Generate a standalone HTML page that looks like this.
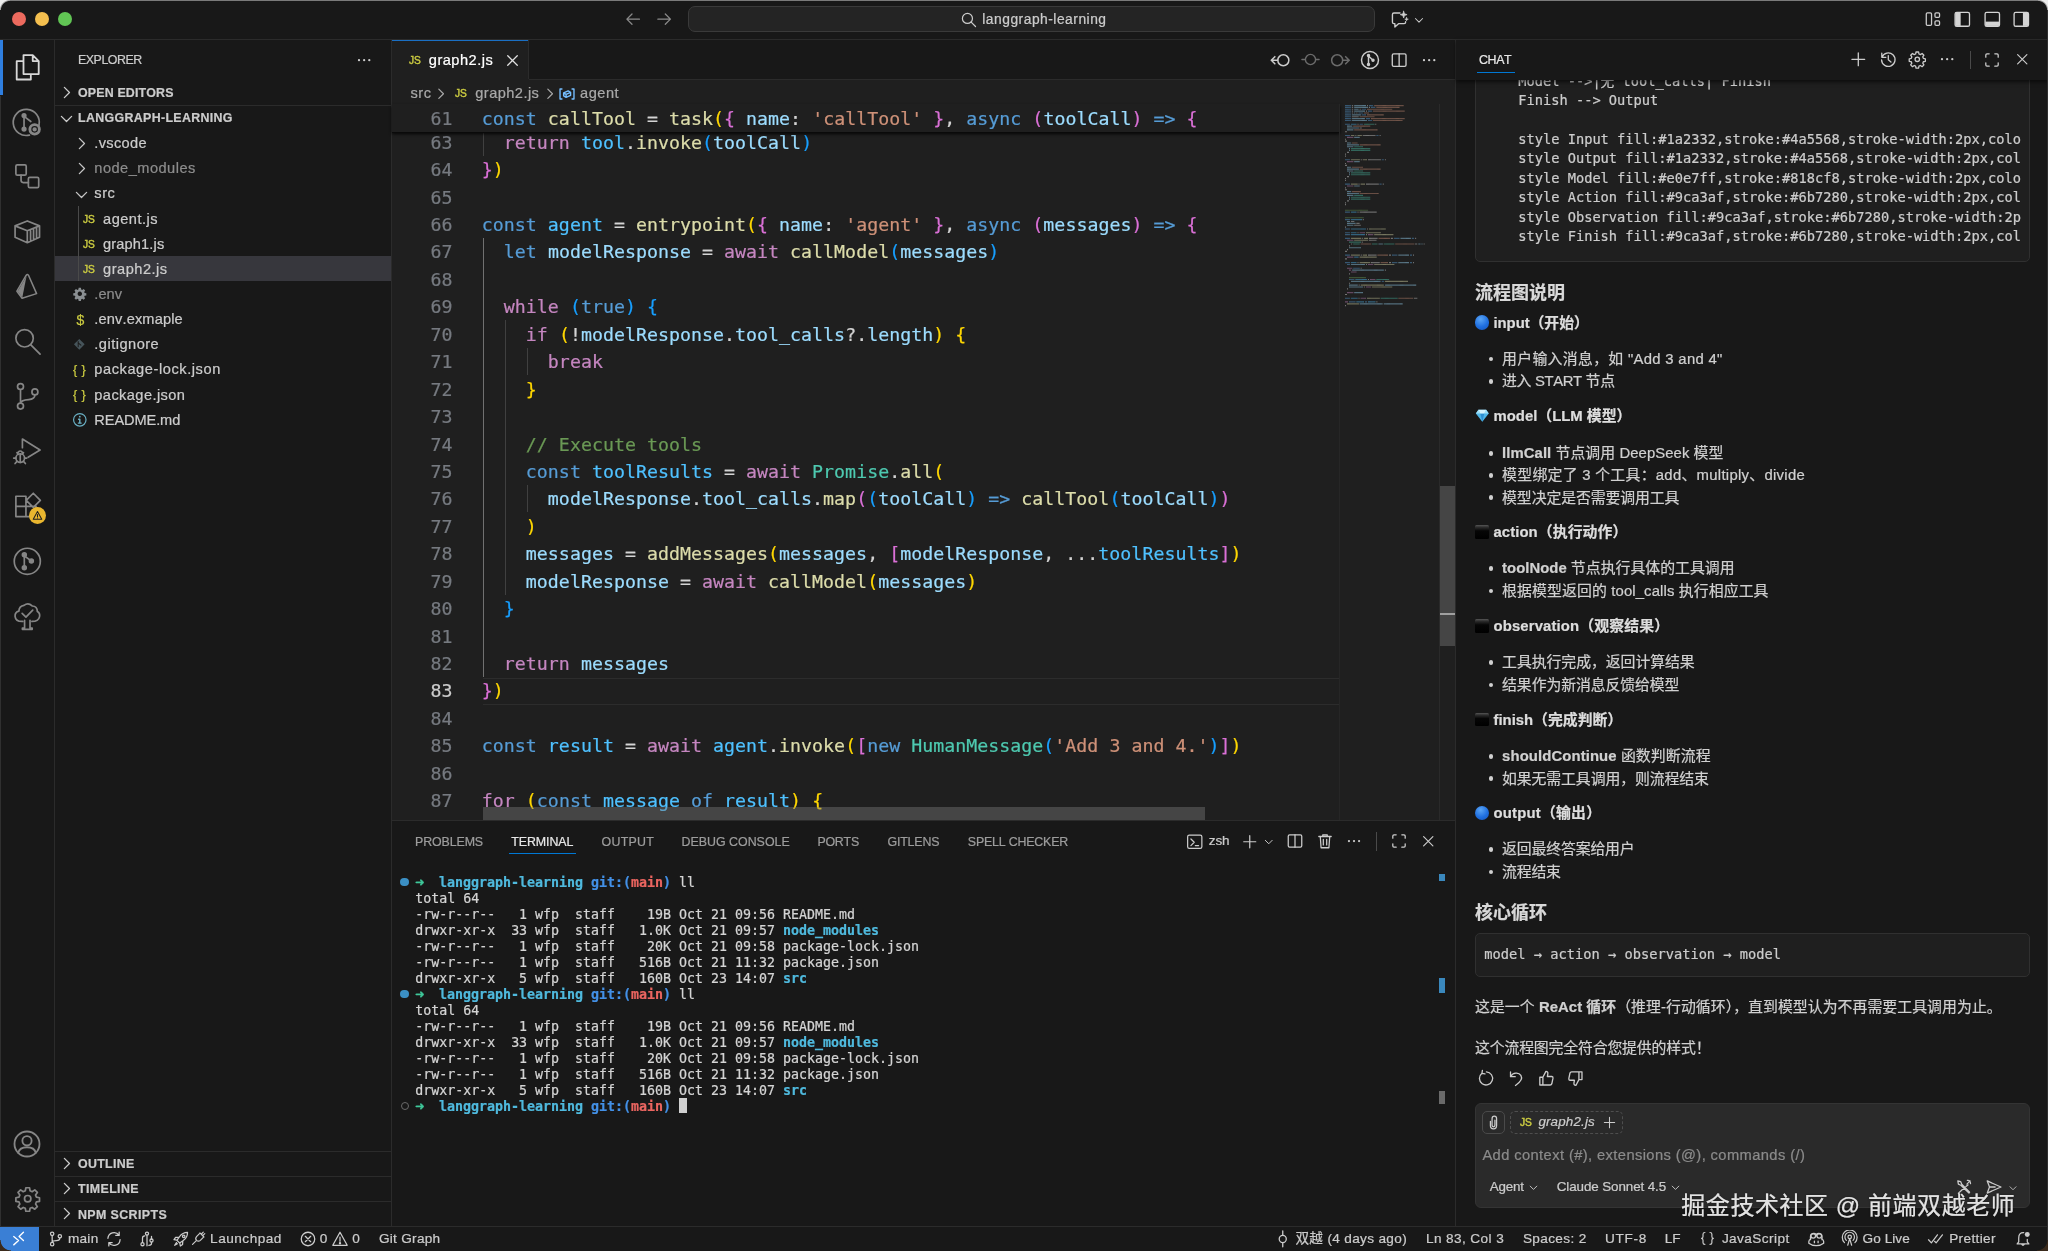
<!DOCTYPE html>
<html lang="zh"><head><meta charset="utf-8"><title>graph2.js — langgraph-learning</title>
<style>
html,body{margin:0;padding:0;background:#181818;}
body{width:2048px;height:1251px;position:relative;overflow:hidden;background:#181818;font-family:'Liberation Sans','Noto Sans CJK SC',sans-serif;font-kerning:none;}
.a{position:absolute;}
.t{white-space:pre;-webkit-text-stroke:0.22px currentColor;}
b{font-weight:700;}
</style></head><body>
<div id="app" style="position:absolute;left:0;top:0;width:2048px;height:1251px;will-change:transform;">
<div class="a" style="left:391.50px;top:39.00px;width:1064.00px;height:782.00px;background:#1f1f1f;"></div>
<div class="a" style="left:391.50px;top:39.00px;width:1064.00px;height:40.00px;background:#181818;"></div>
<div class="a" style="left:528.20px;top:78.50px;width:927.00px;height:1.00px;background:#2b2b2b;"></div>
<div class="a" style="left:392.00px;top:39.00px;width:136.50px;height:41.00px;background:#1f1f1f;"></div>
<div class="a" style="left:528.20px;top:39.00px;width:1.00px;height:40.00px;background:#2b2b2b;"></div>
<div class="a" style="left:0.00px;top:0.00px;width:2048.00px;height:39.00px;background:#181818;"></div>
<div class="a" style="left:0.00px;top:38.90px;width:2048.00px;height:1.00px;background:#2b2b2b;"></div>
<div class="a" style="left:392.00px;top:39.80px;width:136.40px;height:1.20px;background:#1a6fc4;"></div>
<div class="a" style="left:54.00px;top:39.00px;width:1.00px;height:1187.00px;background:#2b2b2b;"></div>
<div class="a" style="left:391.00px;top:39.00px;width:1.00px;height:1187.00px;background:#2b2b2b;"></div>
<div class="a" style="left:1455.00px;top:39.00px;width:1.00px;height:1187.00px;background:#2b2b2b;"></div>
<div class="a" style="left:392.00px;top:820.50px;width:1063.00px;height:405.50px;background:#181818;"></div>
<div class="a" style="left:392.00px;top:820.20px;width:1063.00px;height:1.00px;background:#2b2b2b;"></div>
<div class="a" style="left:0.00px;top:1226.00px;width:2048.00px;height:25.00px;background:#181818;"></div>
<div class="a" style="left:0.00px;top:1225.80px;width:2048.00px;height:1.00px;background:#2b2b2b;"></div>
<div class="a" style="left:12.40px;top:12.20px;width:14.00px;height:14.00px;background:#ec6a5e;border-radius:7px;"></div>
<div class="a" style="left:35.30px;top:12.20px;width:14.00px;height:14.00px;background:#f4bf4f;border-radius:7px;"></div>
<div class="a" style="left:58.10px;top:12.20px;width:14.00px;height:14.00px;background:#61c554;border-radius:7px;"></div>
<svg class="a" style="left:624.35px;top:10.35px;" width="18.30" height="18.30" viewBox="0 0 16 16"><g fill="none" stroke="#8a8a8a" stroke-width="1.12" stroke-linecap="round" stroke-linejoin="round"><path d="M13.5 8 H2.8 M7 3.5 L2.5 8 L7 12.5"/></g></svg>
<svg class="a" style="left:654.55px;top:10.35px;" width="18.30" height="18.30" viewBox="0 0 16 16"><g fill="none" stroke="#8a8a8a" stroke-width="1.12" stroke-linecap="round" stroke-linejoin="round"><path d="M2.5 8 H13.2 M9 3.5 L13.5 8 L9 12.5"/></g></svg>
<div class="a" style="left:688.00px;top:5.80px;width:687.00px;height:26.40px;background:#242424;border:1px solid #3a3a3a;box-sizing:border-box;border-radius:7px;"></div>
<svg class="a" style="left:959.75px;top:10.65px;" width="17.50" height="17.50" viewBox="0 0 16 16"><g fill="none" stroke="#cccccc" stroke-width="1.12" stroke-linecap="round" stroke-linejoin="round"><circle cx="6.8" cy="6.8" r="4.6"/><path d="M10.2 10.2 L14.2 14.2"/></g></svg>
<span class="a t" style="top:10px;line-height:19px;height:19px;color:#cccccc;font-family:'Liberation Sans','Noto Sans CJK SC',sans-serif;font-size:13.8px;font-weight:400;letter-spacing:0.508px;left:982.30px;">langgraph-learning</span>
<svg class="a" style="left:1389.75px;top:9.75px;" width="19.50" height="19.50" viewBox="0 0 16 16"><g fill="none" stroke="#cccccc" stroke-width="1.12" stroke-linecap="round" stroke-linejoin="round"><path d="M8.2 2.5 H3.2 Q2 2.5 2 3.7 V10 Q2 11.2 3.2 11.2 H4 V14 L7 11.2 H11.6 Q12.8 11.2 12.8 10 V9.6"/><path d="M11.2 1 L11.9 3.1 L14 3.8 L11.9 4.5 L11.2 6.6 L10.5 4.5 L8.4 3.8 L10.5 3.1 Z" fill="#cccccc" stroke-width="0.6"/><path d="M13.6 6 L14 7.1 L15.1 7.5 L14 7.9 L13.6 9 L13.2 7.9 L12.1 7.5 L13.2 7.1 Z" fill="#cccccc" stroke-width="0.4"/></g></svg>
<svg class="a" style="left:1412.50px;top:13.80px;" width="12.00" height="12.00" viewBox="0 0 16 16"><g fill="none" stroke="#cccccc" stroke-width="1.34" stroke-linecap="round" stroke-linejoin="round"><path d="M3.2 6 L8 10.8 L12.8 6"/></g></svg>
<svg class="a" style="left:1924.05px;top:9.65px;" width="18.30" height="18.30" viewBox="0 0 16 16"><g fill="none" stroke="#cccccc" stroke-width="1.12" stroke-linecap="round" stroke-linejoin="round"><rect x="2" y="2.5" width="4.6" height="11" rx="1"/><rect x="9.6" y="2.5" width="4" height="4" rx="1"/><rect x="9.6" y="9.5" width="4" height="4" rx="1"/></g></svg>
<svg class="a" style="left:1952.90px;top:9.50px;" width="18.60" height="18.60" viewBox="0 0 16 16"><g fill="none" stroke="#d4d4d4" stroke-width="1.12" stroke-linecap="round" stroke-linejoin="round"><rect x="1.8" y="2" width="12.4" height="12" rx="1.4"/><path d="M2 2.3 H6.6 V13.7 H2 Z" fill="#d4d4d4" stroke="none"/></g></svg>
<svg class="a" style="left:1982.50px;top:9.50px;" width="18.60" height="18.60" viewBox="0 0 16 16"><g fill="none" stroke="#d4d4d4" stroke-width="1.12" stroke-linecap="round" stroke-linejoin="round"><rect x="1.8" y="2" width="12.4" height="12" rx="1.4"/><path d="M2 10 H14 V13.7 H2 Z" fill="#d4d4d4" stroke="none"/></g></svg>
<svg class="a" style="left:2012.30px;top:9.50px;" width="18.60" height="18.60" viewBox="0 0 16 16"><g fill="none" stroke="#d4d4d4" stroke-width="1.12" stroke-linecap="round" stroke-linejoin="round"><rect x="1.8" y="2" width="12.4" height="12" rx="1.4"/><path d="M9.4 2.3 H14 V13.7 H9.4 Z" fill="#d4d4d4" stroke="none"/></g></svg>
<div class="a" style="left:0.00px;top:39.60px;width:2.50px;height:55.00px;background:#2f7fe0;"></div>
<svg class="a" style="left:10.90px;top:50.70px;" width="32.60" height="32.60" viewBox="0 0 24 24"><g fill="none" stroke="#d7d7d7" stroke-width="1.34" stroke-linecap="round" stroke-linejoin="round"><path d="M9.2 3 H16 L20.4 7.4 V17 H9.2 Z M16 3 V7.4 H20.4 M9.2 7.4 H4.2 V21 H14.6 V17"/></g></svg>
<svg class="a" style="left:10.90px;top:105.50px;" width="32.60" height="32.60" viewBox="0 0 24 24"><g fill="none" stroke="#868686" stroke-width="1.25" stroke-linecap="round" stroke-linejoin="round"><path d="M20.6 14.2 A9.6 9.6 0 1 0 13.6 21.4"/><circle cx="9.6" cy="7" r="1.3" fill="#868686"/><circle cx="9.6" cy="17" r="1.3" fill="#868686"/><path d="M9.6 7 V17 M9.6 7.6 L14.6 11.4"/><circle cx="17.4" cy="17.2" r="3.5" stroke-width="2.1"/><circle cx="17.4" cy="17.2" r="1.0" fill="#868686"/></g></svg>
<svg class="a" style="left:10.90px;top:160.40px;" width="32.60" height="32.60" viewBox="0 0 24 24"><g fill="none" stroke="#868686" stroke-width="1.25" stroke-linecap="round" stroke-linejoin="round"><rect x="3.6" y="3.6" width="7.6" height="7.6" rx="1"/><rect x="12.8" y="12.8" width="7.6" height="7.6" rx="1"/><path d="M7.4 11.2 V15 Q7.4 16.6 9 16.6 H12.8"/></g></svg>
<svg class="a" style="left:10.90px;top:215.30px;" width="32.60" height="32.60" viewBox="0 0 24 24"><g fill="none" stroke="#868686" stroke-width="1.25" stroke-linecap="round" stroke-linejoin="round"><path d="M3 8 L12 4.4 L21 8 V16.4 L12 20.4 L3 16.4 Z M3 8 L12 11.6 L21 8 M12 11.6 V20.4 M14.4 11.6 V18.6 M16.6 10.8 V17.6 M18.8 10 V16.6" /></g></svg>
<svg class="a" style="left:12.45px;top:271.75px;" width="29.50" height="29.50" viewBox="0 0 24 24"><g fill="none" stroke="#868686" stroke-width="1.25" stroke-linecap="round" stroke-linejoin="round"><path d="M11.6 2.6 L4 15.6 L8.2 21.4 L20 17.6 L13.6 3 Q12.6 1.4 11.6 2.6 Z" /><path d="M11.8 3.4 L4.6 15.6 L8.4 20.8 Z" fill="#868686" stroke="none"/></g></svg>
<svg class="a" style="left:10.90px;top:325.20px;" width="32.60" height="32.60" viewBox="0 0 24 24"><g fill="none" stroke="#868686" stroke-width="1.25" stroke-linecap="round" stroke-linejoin="round"><circle cx="10" cy="9.8" r="6.4"/><path d="M14.6 14.6 L21.4 21.4"/></g></svg>
<svg class="a" style="left:10.90px;top:380.10px;" width="32.60" height="32.60" viewBox="0 0 24 24"><g fill="none" stroke="#868686" stroke-width="1.25" stroke-linecap="round" stroke-linejoin="round"><circle cx="7" cy="4.8" r="2.2"/><circle cx="7" cy="19.2" r="2.2"/><circle cx="17.6" cy="8.8" r="2.2"/><path d="M7 7 V17 M17.6 11 Q17.6 14 13 14.4 Q7.4 14.8 7 17"/></g></svg>
<svg class="a" style="left:10.90px;top:435.00px;" width="32.60" height="32.60" viewBox="0 0 24 24"><g fill="none" stroke="#868686" stroke-width="1.25" stroke-linecap="round" stroke-linejoin="round"><path d="M8.4 9.4 V3 L21.4 11 L12.6 16.4"/><circle cx="6.8" cy="17" r="3.2"/><path d="M6.8 13.8 V20.2 M4.4 13 L5.4 14.2 M9.2 13 L8.2 14.2 M2 17 H3.6 M10 17 H11.6 M3 21 L4.4 19.4 M10.6 21 L9.2 19.4 M5.4 12.6 Q6.8 11 8.2 12.6"/></g></svg>
<svg class="a" style="left:10.90px;top:489.90px;" width="32.60" height="32.60" viewBox="0 0 24 24"><g fill="none" stroke="#868686" stroke-width="1.25" stroke-linecap="round" stroke-linejoin="round"><path d="M3.6 4.6 H11 V12 H3.6 Z M3.6 12 V19.6 H11 V12 M11 12 H18.4 V19.6 H11 M16.4 2.4 L21.6 7.6 L16.4 12.8 L11.2 7.6 Z"/></g></svg>
<svg class="a" style="left:10.90px;top:544.80px;" width="32.60" height="32.60" viewBox="0 0 24 24"><g fill="none" stroke="#868686" stroke-width="1.25" stroke-linecap="round" stroke-linejoin="round"><circle cx="12" cy="12" r="9.6"/><circle cx="9.8" cy="7.2" r="1.4" fill="#868686"/><circle cx="9.8" cy="16.8" r="1.4" fill="#868686"/><circle cx="15" cy="11.8" r="1.4" fill="#868686"/><path d="M9.8 7.2 V16.8 M9.8 8 L15 11.8"/></g></svg>
<svg class="a" style="left:10.90px;top:599.70px;" width="32.60" height="32.60" viewBox="0 0 24 24"><g fill="none" stroke="#868686" stroke-width="1.25" stroke-linecap="round" stroke-linejoin="round"><path d="M8.6 15.8 Q3.4 16 3 12 Q2.8 9 5.8 8.2 Q6 4.6 9.6 4 Q12.6 1.6 15.6 4.4 Q19.4 4.6 19.4 8.4 Q21.6 9.6 21 12.4 Q20.2 15.8 15.4 15.8 M10 15 V20.6 H8.4 V21.6 H15.6 V20.6 H14 V15 M8.2 9.8 L11 12.6 L16 7.4"/></g></svg>
<div class="a" style="left:28.50px;top:507.00px;width:17.00px;height:17.00px;background:#e9b62f;border-radius:8.5px;"></div>
<svg class="a" style="left:31.50px;top:509.60px;" width="11.00" height="11.00" viewBox="0 0 16 16"><path d="M8 2.2 L14.2 13.4 H1.8 Z M8 6.6 V9.8" fill="none" stroke="#1f1f1f" stroke-width="1.5" stroke-linejoin="round" stroke-linecap="round"/><circle cx="8" cy="11.6" r="0.8" fill="#1f1f1f"/></svg>
<svg class="a" style="left:12.40px;top:1128.60px;" width="30.00" height="30.00" viewBox="0 0 24 24"><g fill="none" stroke="#868686" stroke-width="1.46" stroke-linecap="round" stroke-linejoin="round"><circle cx="12" cy="12" r="10"/><circle cx="12" cy="9.4" r="3.7"/><path d="M5 19 Q6 14.6 12 14.6 Q18 14.6 19 19"/></g></svg>
<svg class="a" style="left:13.50px;top:1184.50px;" width="27.40" height="27.40" viewBox="0 0 24 24"><g fill="none" stroke="#868686" stroke-width="1.51" stroke-linecap="round" stroke-linejoin="round"><circle cx="12" cy="12" r="2.8"/><path d="M10.4 2.4 h3.2 l.5 2.7 l1.8 .75 l2.3-1.55 l2.25 2.25 l-1.55 2.3 l.75 1.8 l2.7 .5 v3.2 l-2.7 .5 l-.75 1.8 l1.55 2.3 l-2.25 2.25 l-2.3-1.55 l-1.8 .75 l-.5 2.7 h-3.2 l-.5-2.7 l-1.8-.75 l-2.3 1.55 l-2.25-2.25 l1.55-2.3 l-.75-1.8 l-2.7-.5 v-3.2 l2.7-.5 l.75-1.8 l-1.55-2.3 l2.25-2.25 l2.3 1.55 l1.8-.75 z"/></g></svg>
<span class="a t" style="top:51px;line-height:18px;height:18px;color:#cccccc;font-family:'Liberation Sans','Noto Sans CJK SC',sans-serif;font-size:12.4px;font-weight:400;letter-spacing:-0.469px;left:78.00px;">EXPLORER</span>
<svg class="a" style="left:355.35px;top:50.65px;" width="18.30" height="18.30" viewBox="0 0 16 16"><g fill="none" stroke="#cccccc" stroke-width="1.12" stroke-linecap="round" stroke-linejoin="round"><circle cx="3.5" cy="8" r="1" fill="#cccccc" stroke="none"/><circle cx="8" cy="8" r="1" fill="#cccccc" stroke="none"/><circle cx="12.5" cy="8" r="1" fill="#cccccc" stroke="none"/></g></svg>
<svg class="a" style="left:58.00px;top:83.90px;" width="17.00" height="17.00" viewBox="0 0 16 16"><g fill="none" stroke="#cccccc" stroke-width="1.23" stroke-linecap="round" stroke-linejoin="round"><path d="M6 3.2 L10.8 8 L6 12.8"/></g></svg>
<span class="a t" style="top:84px;line-height:18px;height:18px;color:#cccccc;font-family:'Liberation Sans','Noto Sans CJK SC',sans-serif;font-size:12.4px;font-weight:700;letter-spacing:0.169px;left:78.00px;">OPEN EDITORS</span>
<div class="a" style="left:55.00px;top:105.40px;width:336.00px;height:1.00px;background:#2b2b2b;"></div>
<svg class="a" style="left:58.00px;top:109.50px;" width="17.00" height="17.00" viewBox="0 0 16 16"><g fill="none" stroke="#cccccc" stroke-width="1.23" stroke-linecap="round" stroke-linejoin="round"><path d="M3.2 6 L8 10.8 L12.8 6"/></g></svg>
<span class="a t" style="top:109px;line-height:18px;height:18px;color:#cccccc;font-family:'Liberation Sans','Noto Sans CJK SC',sans-serif;font-size:12.4px;font-weight:700;letter-spacing:0.342px;left:78.00px;">LANGGRAPH-LEARNING</span>
<div class="a" style="left:55.00px;top:256.00px;width:336.00px;height:25.20px;background:#37373d;"></div>
<div class="a" style="left:78.20px;top:205.50px;width:1.00px;height:75.50px;background:#4a4a4a;"></div>
<svg class="a" style="left:73.00px;top:135.00px;" width="17.00" height="17.00" viewBox="0 0 16 16"><g fill="none" stroke="#c5c5c5" stroke-width="1.23" stroke-linecap="round" stroke-linejoin="round"><path d="M6 3.2 L10.8 8 L6 12.8"/></g></svg>
<span class="a t" style="top:133px;line-height:20px;height:20px;color:#cccccc;font-family:'Liberation Sans','Noto Sans CJK SC',sans-serif;font-size:14.6px;font-weight:400;letter-spacing:0.317px;left:94.30px;">.vscode</span>
<svg class="a" style="left:73.00px;top:160.16px;" width="17.00" height="17.00" viewBox="0 0 16 16"><g fill="none" stroke="#c5c5c5" stroke-width="1.23" stroke-linecap="round" stroke-linejoin="round"><path d="M6 3.2 L10.8 8 L6 12.8"/></g></svg>
<span class="a t" style="top:158px;line-height:20px;height:20px;color:#8c8c8c;font-family:'Liberation Sans','Noto Sans CJK SC',sans-serif;font-size:14.6px;font-weight:400;letter-spacing:0.477px;left:94.30px;">node_modules</span>
<svg class="a" style="left:73.00px;top:185.92px;" width="17.00" height="17.00" viewBox="0 0 16 16"><g fill="none" stroke="#c5c5c5" stroke-width="1.23" stroke-linecap="round" stroke-linejoin="round"><path d="M3.2 6 L8 10.8 L12.8 6"/></g></svg>
<span class="a t" style="top:183px;line-height:20px;height:20px;color:#cccccc;font-family:'Liberation Sans','Noto Sans CJK SC',sans-serif;font-size:14.6px;font-weight:400;letter-spacing:0.566px;left:94.30px;">src</span>
<span class="a t" style="top:210px;line-height:17px;height:17px;color:#cbcb41;font-family:'Liberation Sans','Noto Sans CJK SC',sans-serif;font-size:11.6px;font-weight:400;left:83.00px;transform:scaleX(0.879);transform-origin:left center;-webkit-text-stroke:0.45px currentColor;">JS</span>
<span class="a t" style="top:209px;line-height:20px;height:20px;color:#cccccc;font-family:'Liberation Sans','Noto Sans CJK SC',sans-serif;font-size:14.6px;font-weight:400;letter-spacing:0.468px;left:103.10px;">agent.js</span>
<span class="a t" style="top:235px;line-height:17px;height:17px;color:#cbcb41;font-family:'Liberation Sans','Noto Sans CJK SC',sans-serif;font-size:11.6px;font-weight:400;left:83.00px;transform:scaleX(0.879);transform-origin:left center;-webkit-text-stroke:0.45px currentColor;">JS</span>
<span class="a t" style="top:234px;line-height:20px;height:20px;color:#cccccc;font-family:'Liberation Sans','Noto Sans CJK SC',sans-serif;font-size:14.6px;font-weight:400;letter-spacing:0.132px;left:103.10px;">graph1.js</span>
<span class="a t" style="top:260px;line-height:17px;height:17px;color:#cbcb41;font-family:'Liberation Sans','Noto Sans CJK SC',sans-serif;font-size:11.6px;font-weight:400;left:83.00px;transform:scaleX(0.879);transform-origin:left center;-webkit-text-stroke:0.45px currentColor;">JS</span>
<span class="a t" style="top:259px;line-height:20px;height:20px;color:#cccccc;font-family:'Liberation Sans','Noto Sans CJK SC',sans-serif;font-size:14.6px;font-weight:400;letter-spacing:0.494px;left:103.10px;">graph2.js</span>
<svg class="a" style="left:73.00px;top:287.36px;" width="13.60" height="13.60" viewBox="0 0 16 16"><g fill="none" stroke="#8a8f92" stroke-width="1.12" stroke-linecap="round" stroke-linejoin="round"><path d="M6.7 1 h2.6 l.4 2 l1.1 .5 l1.7-1.1 l1.8 1.8 l-1.1 1.7 l.5 1.1 l2 .4 v2.6 l-2 .4 l-.5 1.1 l1.1 1.7 l-1.8 1.8 l-1.7-1.1 l-1.1 .5 l-.4 2 h-2.6 l-.4-2 l-1.1-.5 l-1.7 1.1 l-1.8-1.8 l1.1-1.7 l-.5-1.1 l-2-.4 v-2.6 l2-.4 l.5-1.1 l-1.1-1.7 l1.8-1.8 l1.7 1.1 l1.1-.5 z M8 5.4 a2.6 2.6 0 1 0 0.01 0 z" fill="#8a8f92" fill-rule="evenodd" stroke="none"/></g></svg>
<span class="a t" style="top:284px;line-height:20px;height:20px;color:#8c8c8c;font-family:'Liberation Sans','Noto Sans CJK SC',sans-serif;font-size:14.6px;font-weight:400;letter-spacing:0.069px;left:94.30px;">.env</span>
<span class="a t" style="top:310px;line-height:20px;height:20px;color:#cbcb41;font-family:'Liberation Sans','Noto Sans CJK SC',sans-serif;font-size:14.0px;font-weight:400;letter-spacing:-0.597px;left:76.40px;">$</span>
<span class="a t" style="top:309px;line-height:20px;height:20px;color:#cccccc;font-family:'Liberation Sans','Noto Sans CJK SC',sans-serif;font-size:14.6px;font-weight:400;letter-spacing:0.144px;left:94.30px;">.env.exmaple</span>
<svg class="a" style="left:73.30px;top:338.38px;" width="12.60" height="12.60" viewBox="0 0 16 16"><g fill="none" stroke="#46545a" stroke-width="1.12" stroke-linecap="round" stroke-linejoin="round"><path d="M8 1.2 L14.8 8 L8 14.8 L1.2 8 Z" fill="#46545a" stroke="none"/></g></svg>
<svg class="a" style="left:73.30px;top:338.38px;" width="12.60" height="12.60" viewBox="0 0 16 16"><g fill="none" stroke="#1b1b1b" stroke-width="1.3" stroke-linecap="round"><path d="M6.6 4.4 V11 M6.6 6.2 L10 9"/></g></svg>
<span class="a t" style="top:334px;line-height:20px;height:20px;color:#cccccc;font-family:'Liberation Sans','Noto Sans CJK SC',sans-serif;font-size:14.6px;font-weight:400;letter-spacing:0.484px;left:94.30px;">.gitignore</span>
<span class="a t" style="top:361px;line-height:18px;height:18px;color:#cbcb41;font-family:'Liberation Sans','Noto Sans CJK SC',sans-serif;font-size:12.6px;font-weight:400;letter-spacing:0.339px;left:73.00px;">{ }</span>
<span class="a t" style="top:359px;line-height:20px;height:20px;color:#cccccc;font-family:'Liberation Sans','Noto Sans CJK SC',sans-serif;font-size:14.6px;font-weight:400;letter-spacing:0.573px;left:94.30px;">package-lock.json</span>
<span class="a t" style="top:386px;line-height:18px;height:18px;color:#cbcb41;font-family:'Liberation Sans','Noto Sans CJK SC',sans-serif;font-size:12.6px;font-weight:400;letter-spacing:0.339px;left:73.00px;">{ }</span>
<span class="a t" style="top:385px;line-height:20px;height:20px;color:#cccccc;font-family:'Liberation Sans','Noto Sans CJK SC',sans-serif;font-size:14.6px;font-weight:400;letter-spacing:0.426px;left:94.30px;">package.json</span>
<svg class="a" style="left:72.00px;top:412.46px;" width="15.60" height="15.60" viewBox="0 0 16 16"><g fill="none" stroke="#6ab0c4" stroke-width="1.23" stroke-linecap="round" stroke-linejoin="round"><circle cx="8" cy="8" r="6.4"/><path d="M8 7.4 V11.4 M6.8 7.4 H8 M6.6 11.4 H9.4" stroke-width="1.5"/><circle cx="8" cy="4.8" r="0.9" fill="#6ab0c4" stroke="none"/></g></svg>
<span class="a t" style="top:410px;line-height:20px;height:20px;color:#cccccc;font-family:'Liberation Sans','Noto Sans CJK SC',sans-serif;font-size:14.6px;font-weight:400;letter-spacing:-0.096px;left:94.30px;">README.md</span>
<div class="a" style="left:55.00px;top:1150.60px;width:336.00px;height:1.00px;background:#2b2b2b;"></div>
<svg class="a" style="left:58.00px;top:1155.10px;" width="17.00" height="17.00" viewBox="0 0 16 16"><g fill="none" stroke="#cccccc" stroke-width="1.23" stroke-linecap="round" stroke-linejoin="round"><path d="M6 3.2 L10.8 8 L6 12.8"/></g></svg>
<span class="a t" style="top:1155px;line-height:18px;height:18px;color:#cccccc;font-family:'Liberation Sans','Noto Sans CJK SC',sans-serif;font-size:12.4px;font-weight:700;letter-spacing:0.318px;left:78.00px;">OUTLINE</span>
<div class="a" style="left:55.00px;top:1176.20px;width:336.00px;height:1.00px;background:#2b2b2b;"></div>
<svg class="a" style="left:58.00px;top:1180.30px;" width="17.00" height="17.00" viewBox="0 0 16 16"><g fill="none" stroke="#cccccc" stroke-width="1.23" stroke-linecap="round" stroke-linejoin="round"><path d="M6 3.2 L10.8 8 L6 12.8"/></g></svg>
<span class="a t" style="top:1180px;line-height:18px;height:18px;color:#cccccc;font-family:'Liberation Sans','Noto Sans CJK SC',sans-serif;font-size:12.4px;font-weight:700;letter-spacing:0.382px;left:78.00px;">TIMELINE</span>
<div class="a" style="left:55.00px;top:1201.30px;width:336.00px;height:1.00px;background:#2b2b2b;"></div>
<svg class="a" style="left:58.00px;top:1205.40px;" width="17.00" height="17.00" viewBox="0 0 16 16"><g fill="none" stroke="#cccccc" stroke-width="1.23" stroke-linecap="round" stroke-linejoin="round"><path d="M6 3.2 L10.8 8 L6 12.8"/></g></svg>
<span class="a t" style="top:1206px;line-height:18px;height:18px;color:#cccccc;font-family:'Liberation Sans','Noto Sans CJK SC',sans-serif;font-size:12.4px;font-weight:700;letter-spacing:0.401px;left:78.00px;">NPM SCRIPTS</span>
<span class="a t" style="top:51px;line-height:17px;height:17px;color:#cbcb41;font-family:'Liberation Sans','Noto Sans CJK SC',sans-serif;font-size:11.6px;font-weight:400;left:408.80px;transform:scaleX(0.879);transform-origin:left center;-webkit-text-stroke:0.45px currentColor;">JS</span>
<span class="a t" style="top:50px;line-height:20px;height:20px;color:#ffffff;font-family:'Liberation Sans','Noto Sans CJK SC',sans-serif;font-size:14.6px;font-weight:400;letter-spacing:0.494px;left:428.80px;">graph2.js</span>
<svg class="a" style="left:503.70px;top:51.70px;" width="17.00" height="17.00" viewBox="0 0 16 16"><g fill="none" stroke="#e0e0e0" stroke-width="1.18" stroke-linecap="round" stroke-linejoin="round"><path d="M3.5 3.5 L12.5 12.5 M12.5 3.5 L3.5 12.5"/></g></svg>
<svg class="a" style="left:1269.95px;top:49.55px;" width="20.50" height="20.50" viewBox="0 0 16 16"><g fill="none" stroke="#cccccc" stroke-width="1.18" stroke-linecap="round" stroke-linejoin="round"><circle cx="10.4" cy="8" r="4.3"/><path d="M6 8 H1.2 M3.8 5.2 L1 8 L3.8 10.8"/></g></svg>
<svg class="a" style="left:1301.00px;top:50.30px;" width="19.00" height="19.00" viewBox="0 0 16 16"><g fill="none" stroke="#6b6b6b" stroke-width="1.18" stroke-linecap="round" stroke-linejoin="round"><circle cx="8" cy="8" r="4.3"/><path d="M0.8 8 H3.7 M12.3 8 H15.2"/></g></svg>
<svg class="a" style="left:1329.55px;top:49.55px;" width="20.50" height="20.50" viewBox="0 0 16 16"><g fill="none" stroke="#6b6b6b" stroke-width="1.18" stroke-linecap="round" stroke-linejoin="round"><circle cx="5.6" cy="8" r="4.3"/><path d="M10 8 H14.8 M12.2 5.2 L15 8 L12.2 10.8"/></g></svg>
<svg class="a" style="left:1359.60px;top:49.80px;" width="20.00" height="20.00" viewBox="0 0 16 16"><g fill="none" stroke="#cccccc" stroke-width="1.18" stroke-linecap="round" stroke-linejoin="round"><circle cx="8" cy="8" r="6.8"/><circle cx="6.8" cy="4.4" r="0.8" fill="#cccccc"/><circle cx="6.8" cy="11.6" r="0.8" fill="#cccccc"/><circle cx="10.4" cy="8.2" r="0.8" fill="#cccccc"/><path d="M6.8 4.4 V11.6 M6.8 4.8 L10.4 8.2"/></g></svg>
<svg class="a" style="left:1390.35px;top:50.65px;" width="18.30" height="18.30" viewBox="0 0 16 16"><g fill="none" stroke="#cccccc" stroke-width="1.18" stroke-linecap="round" stroke-linejoin="round"><rect x="2" y="2.5" width="12" height="11" rx="1.2"/><path d="M8 2.5 V13.5"/></g></svg>
<svg class="a" style="left:1420.05px;top:50.65px;" width="18.30" height="18.30" viewBox="0 0 16 16"><g fill="none" stroke="#cccccc" stroke-width="1.18" stroke-linecap="round" stroke-linejoin="round"><circle cx="3.5" cy="8" r="1" fill="#cccccc" stroke="none"/><circle cx="8" cy="8" r="1" fill="#cccccc" stroke="none"/><circle cx="12.5" cy="8" r="1" fill="#cccccc" stroke="none"/></g></svg>
<span class="a t" style="top:83px;line-height:20px;height:20px;color:#a9a9a9;font-family:'Liberation Sans','Noto Sans CJK SC',sans-serif;font-size:14.6px;font-weight:400;letter-spacing:0.566px;left:410.50px;">src</span>
<svg class="a" style="left:432.75px;top:85.85px;" width="15.50" height="15.50" viewBox="0 0 16 16"><g fill="none" stroke="#a9a9a9" stroke-width="1.23" stroke-linecap="round" stroke-linejoin="round"><path d="M6 3.2 L10.8 8 L6 12.8"/></g></svg>
<span class="a t" style="top:84px;line-height:17px;height:17px;color:#cbcb41;font-family:'Liberation Sans','Noto Sans CJK SC',sans-serif;font-size:11.6px;font-weight:400;left:455.30px;transform:scaleX(0.879);transform-origin:left center;-webkit-text-stroke:0.45px currentColor;">JS</span>
<span class="a t" style="top:83px;line-height:20px;height:20px;color:#a9a9a9;font-family:'Liberation Sans','Noto Sans CJK SC',sans-serif;font-size:14.6px;font-weight:400;letter-spacing:0.444px;left:475.30px;">graph2.js</span>
<svg class="a" style="left:541.75px;top:85.85px;" width="15.50" height="15.50" viewBox="0 0 16 16"><g fill="none" stroke="#a9a9a9" stroke-width="1.23" stroke-linecap="round" stroke-linejoin="round"><path d="M6 3.2 L10.8 8 L6 12.8"/></g></svg>
<svg class="a" style="left:558.00px;top:84.60px;" width="18.00" height="18.00" viewBox="0 0 16 16"><g fill="none" stroke="#75beff" stroke-width="1.23" stroke-linecap="round" stroke-linejoin="round"><path d="M3.5 3.5 H1.8 V12.5 H3.5 M12.5 3.5 H14.2 V12.5 H12.5"/><path d="M5 7 L9 5.2 L11.2 6.6 V9.2 L7.2 11 L5 9.6 Z M5 7 L7.2 8.4 L11.2 6.6 M7.2 8.4 V11"/></g></svg>
<span class="a t" style="top:83px;line-height:20px;height:20px;color:#a9a9a9;font-family:'Liberation Sans','Noto Sans CJK SC',sans-serif;font-size:14.6px;font-weight:400;letter-spacing:0.517px;left:580.00px;">agent</span>
<div class="a" style="left:483.00px;top:677.80px;width:856.00px;height:27.20px;border:1.2px solid #2c2c2c;box-sizing:border-box;border-left:none;border-right:none;"></div>
<div class="a" style="left:482.60px;top:128.33px;width:1.00px;height:27.44px;background:#404040;"></div>
<div class="a" style="left:482.60px;top:238.09px;width:1.00px;height:439.04px;background:#707070;"></div>
<div class="a" style="left:504.62px;top:320.41px;width:1.00px;height:274.40px;background:#404040;"></div>
<div class="a" style="left:526.64px;top:347.85px;width:1.00px;height:27.44px;background:#404040;"></div>
<div class="a" style="left:526.64px;top:485.05px;width:1.00px;height:27.44px;background:#404040;"></div>
<span class="a t" style="top:130px;line-height:25px;height:25px;color:#767a80;font-family:'DejaVu Sans Mono','Noto Sans CJK SC','Liberation Mono',monospace;font-size:18.24px;font-weight:400;letter-spacing:0.030px;right:1595.60px;">63</span>
<span class="a t" style="top:130px;line-height:25px;height:25px;color:#d4d4d4;font-family:'DejaVu Sans Mono','Noto Sans CJK SC','Liberation Mono',monospace;font-size:18.24px;font-weight:400;letter-spacing:0.030px;left:481.80px;"><span style="color:#d4d4d4">  </span><span style="color:#c586c0">return</span><span style="color:#d4d4d4"> </span><span style="color:#4fc1ff">tool</span><span style="color:#d4d4d4">.</span><span style="color:#dcdcaa">invoke</span><span style="color:#179fff">(</span><span style="color:#9cdcfe">toolCall</span><span style="color:#179fff">)</span></span>
<span class="a t" style="top:157px;line-height:25px;height:25px;color:#767a80;font-family:'DejaVu Sans Mono','Noto Sans CJK SC','Liberation Mono',monospace;font-size:18.24px;font-weight:400;letter-spacing:0.030px;right:1595.60px;">64</span>
<span class="a t" style="top:157px;line-height:25px;height:25px;color:#d4d4d4;font-family:'DejaVu Sans Mono','Noto Sans CJK SC','Liberation Mono',monospace;font-size:18.24px;font-weight:400;letter-spacing:0.030px;left:481.80px;"><span style="color:#da70d6">}</span><span style="color:#ffd700">)</span></span>
<span class="a t" style="top:185px;line-height:25px;height:25px;color:#767a80;font-family:'DejaVu Sans Mono','Noto Sans CJK SC','Liberation Mono',monospace;font-size:18.24px;font-weight:400;letter-spacing:0.030px;right:1595.60px;">65</span>
<span class="a t" style="top:185px;line-height:25px;height:25px;color:#d4d4d4;font-family:'DejaVu Sans Mono','Noto Sans CJK SC','Liberation Mono',monospace;font-size:18.24px;font-weight:400;letter-spacing:0.030px;left:481.80px;"></span>
<span class="a t" style="top:212px;line-height:25px;height:25px;color:#767a80;font-family:'DejaVu Sans Mono','Noto Sans CJK SC','Liberation Mono',monospace;font-size:18.24px;font-weight:400;letter-spacing:0.030px;right:1595.60px;">66</span>
<span class="a t" style="top:212px;line-height:25px;height:25px;color:#d4d4d4;font-family:'DejaVu Sans Mono','Noto Sans CJK SC','Liberation Mono',monospace;font-size:18.24px;font-weight:400;letter-spacing:0.030px;left:481.80px;"><span style="color:#569cd6">const</span><span style="color:#d4d4d4"> </span><span style="color:#4fc1ff">agent</span><span style="color:#d4d4d4"> = </span><span style="color:#dcdcaa">entrypoint</span><span style="color:#ffd700">(</span><span style="color:#da70d6">{</span><span style="color:#d4d4d4"> </span><span style="color:#9cdcfe">name</span><span style="color:#d4d4d4">:</span><span style="color:#d4d4d4"> </span><span style="color:#ce9178">'agent'</span><span style="color:#d4d4d4"> </span><span style="color:#da70d6">}</span><span style="color:#d4d4d4">, </span><span style="color:#569cd6">async</span><span style="color:#d4d4d4"> </span><span style="color:#da70d6">(</span><span style="color:#9cdcfe">messages</span><span style="color:#da70d6">)</span><span style="color:#d4d4d4"> </span><span style="color:#569cd6">=&gt;</span><span style="color:#d4d4d4"> </span><span style="color:#da70d6">{</span></span>
<span class="a t" style="top:239px;line-height:25px;height:25px;color:#767a80;font-family:'DejaVu Sans Mono','Noto Sans CJK SC','Liberation Mono',monospace;font-size:18.24px;font-weight:400;letter-spacing:0.030px;right:1595.60px;">67</span>
<span class="a t" style="top:239px;line-height:25px;height:25px;color:#d4d4d4;font-family:'DejaVu Sans Mono','Noto Sans CJK SC','Liberation Mono',monospace;font-size:18.24px;font-weight:400;letter-spacing:0.030px;left:481.80px;"><span style="color:#d4d4d4">  </span><span style="color:#569cd6">let</span><span style="color:#d4d4d4"> </span><span style="color:#9cdcfe">modelResponse</span><span style="color:#d4d4d4"> = </span><span style="color:#c586c0">await</span><span style="color:#d4d4d4"> </span><span style="color:#dcdcaa">callModel</span><span style="color:#179fff">(</span><span style="color:#9cdcfe">messages</span><span style="color:#179fff">)</span></span>
<span class="a t" style="top:267px;line-height:25px;height:25px;color:#767a80;font-family:'DejaVu Sans Mono','Noto Sans CJK SC','Liberation Mono',monospace;font-size:18.24px;font-weight:400;letter-spacing:0.030px;right:1595.60px;">68</span>
<span class="a t" style="top:267px;line-height:25px;height:25px;color:#d4d4d4;font-family:'DejaVu Sans Mono','Noto Sans CJK SC','Liberation Mono',monospace;font-size:18.24px;font-weight:400;letter-spacing:0.030px;left:481.80px;"></span>
<span class="a t" style="top:294px;line-height:25px;height:25px;color:#767a80;font-family:'DejaVu Sans Mono','Noto Sans CJK SC','Liberation Mono',monospace;font-size:18.24px;font-weight:400;letter-spacing:0.030px;right:1595.60px;">69</span>
<span class="a t" style="top:294px;line-height:25px;height:25px;color:#d4d4d4;font-family:'DejaVu Sans Mono','Noto Sans CJK SC','Liberation Mono',monospace;font-size:18.24px;font-weight:400;letter-spacing:0.030px;left:481.80px;"><span style="color:#d4d4d4">  </span><span style="color:#c586c0">while</span><span style="color:#d4d4d4"> </span><span style="color:#179fff">(</span><span style="color:#569cd6">true</span><span style="color:#179fff">)</span><span style="color:#d4d4d4"> </span><span style="color:#179fff">{</span></span>
<span class="a t" style="top:322px;line-height:25px;height:25px;color:#767a80;font-family:'DejaVu Sans Mono','Noto Sans CJK SC','Liberation Mono',monospace;font-size:18.24px;font-weight:400;letter-spacing:0.030px;right:1595.60px;">70</span>
<span class="a t" style="top:322px;line-height:25px;height:25px;color:#d4d4d4;font-family:'DejaVu Sans Mono','Noto Sans CJK SC','Liberation Mono',monospace;font-size:18.24px;font-weight:400;letter-spacing:0.030px;left:481.80px;"><span style="color:#d4d4d4">    </span><span style="color:#c586c0">if</span><span style="color:#d4d4d4"> </span><span style="color:#ffd700">(</span><span style="color:#d4d4d4">!</span><span style="color:#9cdcfe">modelResponse</span><span style="color:#d4d4d4">.</span><span style="color:#9cdcfe">tool_calls</span><span style="color:#d4d4d4">?.</span><span style="color:#9cdcfe">length</span><span style="color:#ffd700">)</span><span style="color:#d4d4d4"> </span><span style="color:#ffd700">{</span></span>
<span class="a t" style="top:349px;line-height:25px;height:25px;color:#767a80;font-family:'DejaVu Sans Mono','Noto Sans CJK SC','Liberation Mono',monospace;font-size:18.24px;font-weight:400;letter-spacing:0.030px;right:1595.60px;">71</span>
<span class="a t" style="top:349px;line-height:25px;height:25px;color:#d4d4d4;font-family:'DejaVu Sans Mono','Noto Sans CJK SC','Liberation Mono',monospace;font-size:18.24px;font-weight:400;letter-spacing:0.030px;left:481.80px;"><span style="color:#d4d4d4">      </span><span style="color:#c586c0">break</span></span>
<span class="a t" style="top:377px;line-height:25px;height:25px;color:#767a80;font-family:'DejaVu Sans Mono','Noto Sans CJK SC','Liberation Mono',monospace;font-size:18.24px;font-weight:400;letter-spacing:0.030px;right:1595.60px;">72</span>
<span class="a t" style="top:377px;line-height:25px;height:25px;color:#d4d4d4;font-family:'DejaVu Sans Mono','Noto Sans CJK SC','Liberation Mono',monospace;font-size:18.24px;font-weight:400;letter-spacing:0.030px;left:481.80px;"><span style="color:#d4d4d4">    </span><span style="color:#ffd700">}</span></span>
<span class="a t" style="top:404px;line-height:25px;height:25px;color:#767a80;font-family:'DejaVu Sans Mono','Noto Sans CJK SC','Liberation Mono',monospace;font-size:18.24px;font-weight:400;letter-spacing:0.030px;right:1595.60px;">73</span>
<span class="a t" style="top:404px;line-height:25px;height:25px;color:#d4d4d4;font-family:'DejaVu Sans Mono','Noto Sans CJK SC','Liberation Mono',monospace;font-size:18.24px;font-weight:400;letter-spacing:0.030px;left:481.80px;"></span>
<span class="a t" style="top:432px;line-height:25px;height:25px;color:#767a80;font-family:'DejaVu Sans Mono','Noto Sans CJK SC','Liberation Mono',monospace;font-size:18.24px;font-weight:400;letter-spacing:0.030px;right:1595.60px;">74</span>
<span class="a t" style="top:432px;line-height:25px;height:25px;color:#d4d4d4;font-family:'DejaVu Sans Mono','Noto Sans CJK SC','Liberation Mono',monospace;font-size:18.24px;font-weight:400;letter-spacing:0.030px;left:481.80px;"><span style="color:#d4d4d4">    </span><span style="color:#6a9955">// Execute tools</span></span>
<span class="a t" style="top:459px;line-height:25px;height:25px;color:#767a80;font-family:'DejaVu Sans Mono','Noto Sans CJK SC','Liberation Mono',monospace;font-size:18.24px;font-weight:400;letter-spacing:0.030px;right:1595.60px;">75</span>
<span class="a t" style="top:459px;line-height:25px;height:25px;color:#d4d4d4;font-family:'DejaVu Sans Mono','Noto Sans CJK SC','Liberation Mono',monospace;font-size:18.24px;font-weight:400;letter-spacing:0.030px;left:481.80px;"><span style="color:#d4d4d4">    </span><span style="color:#569cd6">const</span><span style="color:#d4d4d4"> </span><span style="color:#4fc1ff">toolResults</span><span style="color:#d4d4d4"> = </span><span style="color:#c586c0">await</span><span style="color:#d4d4d4"> </span><span style="color:#4ec9b0">Promise</span><span style="color:#d4d4d4">.</span><span style="color:#dcdcaa">all</span><span style="color:#ffd700">(</span></span>
<span class="a t" style="top:486px;line-height:25px;height:25px;color:#767a80;font-family:'DejaVu Sans Mono','Noto Sans CJK SC','Liberation Mono',monospace;font-size:18.24px;font-weight:400;letter-spacing:0.030px;right:1595.60px;">76</span>
<span class="a t" style="top:486px;line-height:25px;height:25px;color:#d4d4d4;font-family:'DejaVu Sans Mono','Noto Sans CJK SC','Liberation Mono',monospace;font-size:18.24px;font-weight:400;letter-spacing:0.030px;left:481.80px;"><span style="color:#d4d4d4">      </span><span style="color:#9cdcfe">modelResponse</span><span style="color:#d4d4d4">.</span><span style="color:#9cdcfe">tool_calls</span><span style="color:#d4d4d4">.</span><span style="color:#dcdcaa">map</span><span style="color:#da70d6">(</span><span style="color:#179fff">(</span><span style="color:#9cdcfe">toolCall</span><span style="color:#179fff">)</span><span style="color:#d4d4d4"> </span><span style="color:#569cd6">=&gt;</span><span style="color:#d4d4d4"> </span><span style="color:#dcdcaa">callTool</span><span style="color:#179fff">(</span><span style="color:#9cdcfe">toolCall</span><span style="color:#179fff">)</span><span style="color:#da70d6">)</span></span>
<span class="a t" style="top:514px;line-height:25px;height:25px;color:#767a80;font-family:'DejaVu Sans Mono','Noto Sans CJK SC','Liberation Mono',monospace;font-size:18.24px;font-weight:400;letter-spacing:0.030px;right:1595.60px;">77</span>
<span class="a t" style="top:514px;line-height:25px;height:25px;color:#d4d4d4;font-family:'DejaVu Sans Mono','Noto Sans CJK SC','Liberation Mono',monospace;font-size:18.24px;font-weight:400;letter-spacing:0.030px;left:481.80px;"><span style="color:#d4d4d4">    </span><span style="color:#ffd700">)</span></span>
<span class="a t" style="top:541px;line-height:25px;height:25px;color:#767a80;font-family:'DejaVu Sans Mono','Noto Sans CJK SC','Liberation Mono',monospace;font-size:18.24px;font-weight:400;letter-spacing:0.030px;right:1595.60px;">78</span>
<span class="a t" style="top:541px;line-height:25px;height:25px;color:#d4d4d4;font-family:'DejaVu Sans Mono','Noto Sans CJK SC','Liberation Mono',monospace;font-size:18.24px;font-weight:400;letter-spacing:0.030px;left:481.80px;"><span style="color:#d4d4d4">    </span><span style="color:#9cdcfe">messages</span><span style="color:#d4d4d4"> = </span><span style="color:#dcdcaa">addMessages</span><span style="color:#ffd700">(</span><span style="color:#9cdcfe">messages</span><span style="color:#d4d4d4">, </span><span style="color:#da70d6">[</span><span style="color:#9cdcfe">modelResponse</span><span style="color:#d4d4d4">, ...</span><span style="color:#4fc1ff">toolResults</span><span style="color:#da70d6">]</span><span style="color:#ffd700">)</span></span>
<span class="a t" style="top:569px;line-height:25px;height:25px;color:#767a80;font-family:'DejaVu Sans Mono','Noto Sans CJK SC','Liberation Mono',monospace;font-size:18.24px;font-weight:400;letter-spacing:0.030px;right:1595.60px;">79</span>
<span class="a t" style="top:569px;line-height:25px;height:25px;color:#d4d4d4;font-family:'DejaVu Sans Mono','Noto Sans CJK SC','Liberation Mono',monospace;font-size:18.24px;font-weight:400;letter-spacing:0.030px;left:481.80px;"><span style="color:#d4d4d4">    </span><span style="color:#9cdcfe">modelResponse</span><span style="color:#d4d4d4"> = </span><span style="color:#c586c0">await</span><span style="color:#d4d4d4"> </span><span style="color:#dcdcaa">callModel</span><span style="color:#ffd700">(</span><span style="color:#9cdcfe">messages</span><span style="color:#ffd700">)</span></span>
<span class="a t" style="top:596px;line-height:25px;height:25px;color:#767a80;font-family:'DejaVu Sans Mono','Noto Sans CJK SC','Liberation Mono',monospace;font-size:18.24px;font-weight:400;letter-spacing:0.030px;right:1595.60px;">80</span>
<span class="a t" style="top:596px;line-height:25px;height:25px;color:#d4d4d4;font-family:'DejaVu Sans Mono','Noto Sans CJK SC','Liberation Mono',monospace;font-size:18.24px;font-weight:400;letter-spacing:0.030px;left:481.80px;"><span style="color:#d4d4d4">  </span><span style="color:#179fff">}</span></span>
<span class="a t" style="top:624px;line-height:25px;height:25px;color:#767a80;font-family:'DejaVu Sans Mono','Noto Sans CJK SC','Liberation Mono',monospace;font-size:18.24px;font-weight:400;letter-spacing:0.030px;right:1595.60px;">81</span>
<span class="a t" style="top:624px;line-height:25px;height:25px;color:#d4d4d4;font-family:'DejaVu Sans Mono','Noto Sans CJK SC','Liberation Mono',monospace;font-size:18.24px;font-weight:400;letter-spacing:0.030px;left:481.80px;"></span>
<span class="a t" style="top:651px;line-height:25px;height:25px;color:#767a80;font-family:'DejaVu Sans Mono','Noto Sans CJK SC','Liberation Mono',monospace;font-size:18.24px;font-weight:400;letter-spacing:0.030px;right:1595.60px;">82</span>
<span class="a t" style="top:651px;line-height:25px;height:25px;color:#d4d4d4;font-family:'DejaVu Sans Mono','Noto Sans CJK SC','Liberation Mono',monospace;font-size:18.24px;font-weight:400;letter-spacing:0.030px;left:481.80px;"><span style="color:#d4d4d4">  </span><span style="color:#c586c0">return</span><span style="color:#d4d4d4"> </span><span style="color:#9cdcfe">messages</span></span>
<span class="a t" style="top:678px;line-height:25px;height:25px;color:#cccccc;font-family:'DejaVu Sans Mono','Noto Sans CJK SC','Liberation Mono',monospace;font-size:18.24px;font-weight:400;letter-spacing:0.030px;right:1595.60px;">83</span>
<span class="a t" style="top:678px;line-height:25px;height:25px;color:#d4d4d4;font-family:'DejaVu Sans Mono','Noto Sans CJK SC','Liberation Mono',monospace;font-size:18.24px;font-weight:400;letter-spacing:0.030px;left:481.80px;"><span style="color:#da70d6">}</span><span style="color:#ffd700">)</span></span>
<span class="a t" style="top:706px;line-height:25px;height:25px;color:#767a80;font-family:'DejaVu Sans Mono','Noto Sans CJK SC','Liberation Mono',monospace;font-size:18.24px;font-weight:400;letter-spacing:0.030px;right:1595.60px;">84</span>
<span class="a t" style="top:706px;line-height:25px;height:25px;color:#d4d4d4;font-family:'DejaVu Sans Mono','Noto Sans CJK SC','Liberation Mono',monospace;font-size:18.24px;font-weight:400;letter-spacing:0.030px;left:481.80px;"></span>
<span class="a t" style="top:733px;line-height:25px;height:25px;color:#767a80;font-family:'DejaVu Sans Mono','Noto Sans CJK SC','Liberation Mono',monospace;font-size:18.24px;font-weight:400;letter-spacing:0.030px;right:1595.60px;">85</span>
<span class="a t" style="top:733px;line-height:25px;height:25px;color:#d4d4d4;font-family:'DejaVu Sans Mono','Noto Sans CJK SC','Liberation Mono',monospace;font-size:18.24px;font-weight:400;letter-spacing:0.030px;left:481.80px;"><span style="color:#569cd6">const</span><span style="color:#d4d4d4"> </span><span style="color:#4fc1ff">result</span><span style="color:#d4d4d4"> = </span><span style="color:#c586c0">await</span><span style="color:#d4d4d4"> </span><span style="color:#4fc1ff">agent</span><span style="color:#d4d4d4">.</span><span style="color:#dcdcaa">invoke</span><span style="color:#ffd700">(</span><span style="color:#da70d6">[</span><span style="color:#569cd6">new</span><span style="color:#d4d4d4"> </span><span style="color:#4ec9b0">HumanMessage</span><span style="color:#179fff">(</span><span style="color:#ce9178">'Add 3 and 4.'</span><span style="color:#179fff">)</span><span style="color:#da70d6">]</span><span style="color:#ffd700">)</span></span>
<span class="a t" style="top:761px;line-height:25px;height:25px;color:#767a80;font-family:'DejaVu Sans Mono','Noto Sans CJK SC','Liberation Mono',monospace;font-size:18.24px;font-weight:400;letter-spacing:0.030px;right:1595.60px;">86</span>
<span class="a t" style="top:761px;line-height:25px;height:25px;color:#d4d4d4;font-family:'DejaVu Sans Mono','Noto Sans CJK SC','Liberation Mono',monospace;font-size:18.24px;font-weight:400;letter-spacing:0.030px;left:481.80px;"></span>
<span class="a t" style="top:788px;line-height:25px;height:25px;color:#767a80;font-family:'DejaVu Sans Mono','Noto Sans CJK SC','Liberation Mono',monospace;font-size:18.24px;font-weight:400;letter-spacing:0.030px;right:1595.60px;">87</span>
<span class="a t" style="top:788px;line-height:25px;height:25px;color:#d4d4d4;font-family:'DejaVu Sans Mono','Noto Sans CJK SC','Liberation Mono',monospace;font-size:18.24px;font-weight:400;letter-spacing:0.030px;left:481.80px;"><span style="color:#c586c0">for</span><span style="color:#d4d4d4"> </span><span style="color:#ffd700">(</span><span style="color:#569cd6">const</span><span style="color:#d4d4d4"> </span><span style="color:#4fc1ff">message</span><span style="color:#d4d4d4"> </span><span style="color:#569cd6">of</span><span style="color:#d4d4d4"> </span><span style="color:#4fc1ff">result</span><span style="color:#ffd700">)</span><span style="color:#d4d4d4"> </span><span style="color:#ffd700">{</span></span>
<div class="a" style="left:392.00px;top:807.00px;width:947.00px;height:13.50px;background:#1f1f1f;opacity:0.0;"></div>
<div class="a" style="left:392.00px;top:104.00px;width:947.50px;height:28.30px;background:#1f1f1f;box-shadow:0 2px 3px rgba(0,0,0,0.85);"></div>
<div class="a" style="left:392.00px;top:132.30px;width:947.50px;height:1.20px;background:#0a0a0a;"></div>
<span class="a t" style="top:106px;line-height:25px;height:25px;color:#767a80;font-family:'DejaVu Sans Mono','Noto Sans CJK SC','Liberation Mono',monospace;font-size:18.24px;font-weight:400;letter-spacing:0.030px;right:1595.60px;">61</span>
<span class="a t" style="top:106px;line-height:25px;height:25px;color:#d4d4d4;font-family:'DejaVu Sans Mono','Noto Sans CJK SC','Liberation Mono',monospace;font-size:18.24px;font-weight:400;letter-spacing:0.030px;left:481.80px;"><span style="color:#569cd6">const</span><span style="color:#d4d4d4"> </span><span style="color:#dcdcaa">callTool</span><span style="color:#d4d4d4"> = </span><span style="color:#dcdcaa">task</span><span style="color:#ffd700">(</span><span style="color:#da70d6">{</span><span style="color:#d4d4d4"> </span><span style="color:#9cdcfe">name</span><span style="color:#d4d4d4">:</span><span style="color:#d4d4d4"> </span><span style="color:#ce9178">'callTool'</span><span style="color:#d4d4d4"> </span><span style="color:#da70d6">}</span><span style="color:#d4d4d4">, </span><span style="color:#569cd6">async</span><span style="color:#d4d4d4"> </span><span style="color:#da70d6">(</span><span style="color:#9cdcfe">toolCall</span><span style="color:#da70d6">)</span><span style="color:#d4d4d4"> </span><span style="color:#569cd6">=&gt;</span><span style="color:#d4d4d4"> </span><span style="color:#da70d6">{</span></span>
<div class="a" style="left:483.00px;top:807.20px;width:722.00px;height:12.60px;background:rgba(121,121,121,0.42);"></div>
<div class="a" style="left:1339.00px;top:104.00px;width:1.00px;height:716.00px;background:#262626;"></div>
<div class="a" style="left:1439.00px;top:485.60px;width:15.60px;height:160.40px;background:rgba(121,121,121,0.42);"></div>
<div class="a" style="left:1439.00px;top:613.00px;width:15.60px;height:2.20px;background:#a0a0a0;"></div>
<div class="a" style="left:1439.00px;top:104.00px;width:1.00px;height:716.00px;background:#2a2a2a;"></div>
<svg class="a" style="left:1339px;top:0px" width="101" height="400" viewBox="1339 0 101 400"><g opacity="0.58"><path d="M1345.0 105.55h6.3" stroke="#569cd6" stroke-width="1.15" stroke-dasharray="0.8 0.28" fill="none"/><path d="M1352.3 105.55h1.1" stroke="#d4d4d4" stroke-width="1.15" stroke-dasharray="0.8 0.28" fill="none"/><path d="M1354.4 105.55h11.6" stroke="#9cdcfe" stroke-width="1.15" stroke-dasharray="0.8 0.28" fill="none"/><path d="M1367.0 105.55h1.1" stroke="#d4d4d4" stroke-width="1.15" stroke-dasharray="0.8 0.28" fill="none"/><path d="M1369.1 105.55h4.2" stroke="#569cd6" stroke-width="1.15" stroke-dasharray="0.8 0.28" fill="none"/><path d="M1374.4 105.55h29.4" stroke="#ce9178" stroke-width="1.15" stroke-dasharray="0.8 0.28" fill="none"/><path d="M1345.0 107.42h6.3" stroke="#569cd6" stroke-width="1.15" stroke-dasharray="0.8 0.28" fill="none"/><path d="M1352.3 107.42h1.1" stroke="#d4d4d4" stroke-width="1.15" stroke-dasharray="0.8 0.28" fill="none"/><path d="M1354.4 107.42h13.7" stroke="#9cdcfe" stroke-width="1.15" stroke-dasharray="0.8 0.28" fill="none"/><path d="M1369.1 107.42h1.1" stroke="#d4d4d4" stroke-width="1.15" stroke-dasharray="0.8 0.28" fill="none"/><path d="M1371.2 107.42h4.2" stroke="#569cd6" stroke-width="1.15" stroke-dasharray="0.8 0.28" fill="none"/><path d="M1376.5 107.42h23.1" stroke="#ce9178" stroke-width="1.15" stroke-dasharray="0.8 0.28" fill="none"/><path d="M1345.0 109.29h6.3" stroke="#569cd6" stroke-width="1.15" stroke-dasharray="0.8 0.28" fill="none"/><path d="M1352.3 109.29h1.1" stroke="#d4d4d4" stroke-width="1.15" stroke-dasharray="0.8 0.28" fill="none"/><path d="M1354.4 109.29h4.2" stroke="#9cdcfe" stroke-width="1.15" stroke-dasharray="0.8 0.28" fill="none"/><path d="M1359.7 109.29h1.1" stroke="#d4d4d4" stroke-width="1.15" stroke-dasharray="0.8 0.28" fill="none"/><path d="M1361.8 109.29h4.2" stroke="#569cd6" stroke-width="1.15" stroke-dasharray="0.8 0.28" fill="none"/><path d="M1367.0 109.29h25.2" stroke="#ce9178" stroke-width="1.15" stroke-dasharray="0.8 0.28" fill="none"/><path d="M1345.0 111.16h6.3" stroke="#569cd6" stroke-width="1.15" stroke-dasharray="0.8 0.28" fill="none"/><path d="M1352.3 111.16h1.1" stroke="#d4d4d4" stroke-width="1.15" stroke-dasharray="0.8 0.28" fill="none"/><path d="M1354.4 111.16h10.5" stroke="#9cdcfe" stroke-width="1.15" stroke-dasharray="0.8 0.28" fill="none"/><path d="M1366.0 111.16h1.1" stroke="#d4d4d4" stroke-width="1.15" stroke-dasharray="0.8 0.28" fill="none"/><path d="M1368.1 111.16h4.2" stroke="#569cd6" stroke-width="1.15" stroke-dasharray="0.8 0.28" fill="none"/><path d="M1373.3 111.16h31.5" stroke="#ce9178" stroke-width="1.15" stroke-dasharray="0.8 0.28" fill="none"/><path d="M1345.0 113.03h6.3" stroke="#569cd6" stroke-width="1.15" stroke-dasharray="0.8 0.28" fill="none"/><path d="M1352.3 113.03h1.1" stroke="#d4d4d4" stroke-width="1.15" stroke-dasharray="0.8 0.28" fill="none"/><path d="M1354.4 113.03h1.1" stroke="#9cdcfe" stroke-width="1.15" stroke-dasharray="0.8 0.28" fill="none"/><path d="M1356.5 113.03h1.1" stroke="#d4d4d4" stroke-width="1.15" stroke-dasharray="0.8 0.28" fill="none"/><path d="M1358.6 113.03h4.2" stroke="#569cd6" stroke-width="1.15" stroke-dasharray="0.8 0.28" fill="none"/><path d="M1363.9 113.03h5.2" stroke="#ce9178" stroke-width="1.15" stroke-dasharray="0.8 0.28" fill="none"/><path d="M1345.0 114.90h6.3" stroke="#569cd6" stroke-width="1.15" stroke-dasharray="0.8 0.28" fill="none"/><path d="M1352.3 114.90h8.4" stroke="#9cdcfe" stroke-width="1.15" stroke-dasharray="0.8 0.28" fill="none"/><path d="M1361.8 114.90h4.2" stroke="#569cd6" stroke-width="1.15" stroke-dasharray="0.8 0.28" fill="none"/><path d="M1367.0 114.90h16.8" stroke="#ce9178" stroke-width="1.15" stroke-dasharray="0.8 0.28" fill="none"/><path d="M1345.0 116.77h6.3" stroke="#569cd6" stroke-width="1.15" stroke-dasharray="0.8 0.28" fill="none"/><path d="M1352.3 116.77h6.3" stroke="#d4d4d4" stroke-width="1.15" stroke-dasharray="0.8 0.28" fill="none"/><path d="M1359.7 116.77h14.7" stroke="#ce9178" stroke-width="1.15" stroke-dasharray="0.8 0.28" fill="none"/><path d="M1345.0 118.64h6.3" stroke="#569cd6" stroke-width="1.15" stroke-dasharray="0.8 0.28" fill="none"/><path d="M1352.3 118.64h12.6" stroke="#9cdcfe" stroke-width="1.15" stroke-dasharray="0.8 0.28" fill="none"/><path d="M1366.0 118.64h4.2" stroke="#569cd6" stroke-width="1.15" stroke-dasharray="0.8 0.28" fill="none"/><path d="M1371.2 118.64h33.6" stroke="#ce9178" stroke-width="1.15" stroke-dasharray="0.8 0.28" fill="none"/><path d="M1345.0 120.51h6.3" stroke="#569cd6" stroke-width="1.15" stroke-dasharray="0.8 0.28" fill="none"/><path d="M1352.3 120.51h14.7" stroke="#9cdcfe" stroke-width="1.15" stroke-dasharray="0.8 0.28" fill="none"/><path d="M1368.1 120.51h4.2" stroke="#569cd6" stroke-width="1.15" stroke-dasharray="0.8 0.28" fill="none"/><path d="M1373.3 120.51h29.4" stroke="#ce9178" stroke-width="1.15" stroke-dasharray="0.8 0.28" fill="none"/><path d="M1345.0 124.25h5.2" stroke="#569cd6" stroke-width="1.15" stroke-dasharray="0.8 0.28" fill="none"/><path d="M1351.3 124.25h5.2" stroke="#4fc1ff" stroke-width="1.15" stroke-dasharray="0.8 0.28" fill="none"/><path d="M1357.6 124.25h1.1" stroke="#d4d4d4" stroke-width="1.15" stroke-dasharray="0.8 0.28" fill="none"/><path d="M1359.7 124.25h3.2" stroke="#569cd6" stroke-width="1.15" stroke-dasharray="0.8 0.28" fill="none"/><path d="M1363.9 124.25h10.5" stroke="#4ec9b0" stroke-width="1.15" stroke-dasharray="0.8 0.28" fill="none"/><path d="M1375.4 124.25h1.1" stroke="#d4d4d4" stroke-width="1.15" stroke-dasharray="0.8 0.28" fill="none"/><path d="M1347.1 126.12h5.2" stroke="#9cdcfe" stroke-width="1.15" stroke-dasharray="0.8 0.28" fill="none"/><path d="M1353.4 126.12h16.8" stroke="#ce9178" stroke-width="1.15" stroke-dasharray="0.8 0.28" fill="none"/><path d="M1347.1 127.99h11.6" stroke="#9cdcfe" stroke-width="1.15" stroke-dasharray="0.8 0.28" fill="none"/><path d="M1359.7 127.99h2.1" stroke="#d4d4d4" stroke-width="1.15" stroke-dasharray="0.8 0.28" fill="none"/><path d="M1347.1 129.86h6.3" stroke="#9cdcfe" stroke-width="1.15" stroke-dasharray="0.8 0.28" fill="none"/><path d="M1354.4 129.86h23.1" stroke="#ce9178" stroke-width="1.15" stroke-dasharray="0.8 0.28" fill="none"/><path d="M1345.0 131.74h2.1" stroke="#d4d4d4" stroke-width="1.15" stroke-dasharray="0.8 0.28" fill="none"/><path d="M1345.0 135.48h5.2" stroke="#569cd6" stroke-width="1.15" stroke-dasharray="0.8 0.28" fill="none"/><path d="M1351.3 135.48h3.2" stroke="#dcdcaa" stroke-width="1.15" stroke-dasharray="0.8 0.28" fill="none"/><path d="M1355.5 135.48h1.1" stroke="#d4d4d4" stroke-width="1.15" stroke-dasharray="0.8 0.28" fill="none"/><path d="M1357.6 135.48h4.2" stroke="#dcdcaa" stroke-width="1.15" stroke-dasharray="0.8 0.28" fill="none"/><path d="M1362.8 135.48h12.6" stroke="#d4d4d4" stroke-width="1.15" stroke-dasharray="0.8 0.28" fill="none"/><path d="M1376.5 135.48h2.1" stroke="#569cd6" stroke-width="1.15" stroke-dasharray="0.8 0.28" fill="none"/><path d="M1379.7 135.48h1.1" stroke="#d4d4d4" stroke-width="1.15" stroke-dasharray="0.8 0.28" fill="none"/><path d="M1347.1 137.35h6.3" stroke="#c586c0" stroke-width="1.15" stroke-dasharray="0.8 0.28" fill="none"/><path d="M1354.4 137.35h5.2" stroke="#9cdcfe" stroke-width="1.15" stroke-dasharray="0.8 0.28" fill="none"/><path d="M1345.0 139.22h1.1" stroke="#d4d4d4" stroke-width="1.15" stroke-dasharray="0.8 0.28" fill="none"/><path d="M1345.0 141.09h2.1" stroke="#d4d4d4" stroke-width="1.15" stroke-dasharray="0.8 0.28" fill="none"/><path d="M1347.1 142.96h4.2" stroke="#9cdcfe" stroke-width="1.15" stroke-dasharray="0.8 0.28" fill="none"/><path d="M1352.3 142.96h5.2" stroke="#ce9178" stroke-width="1.15" stroke-dasharray="0.8 0.28" fill="none"/><path d="M1347.1 144.83h11.6" stroke="#9cdcfe" stroke-width="1.15" stroke-dasharray="0.8 0.28" fill="none"/><path d="M1359.7 144.83h21.0" stroke="#ce9178" stroke-width="1.15" stroke-dasharray="0.8 0.28" fill="none"/><path d="M1347.1 146.70h6.3" stroke="#9cdcfe" stroke-width="1.15" stroke-dasharray="0.8 0.28" fill="none"/><path d="M1354.4 146.70h8.4" stroke="#4ec9b0" stroke-width="1.15" stroke-dasharray="0.8 0.28" fill="none"/><path d="M1349.2 148.57h1.1" stroke="#9cdcfe" stroke-width="1.15" stroke-dasharray="0.8 0.28" fill="none"/><path d="M1351.3 148.57h18.9" stroke="#4ec9b0" stroke-width="1.15" stroke-dasharray="0.8 0.28" fill="none"/><path d="M1349.2 150.44h1.1" stroke="#9cdcfe" stroke-width="1.15" stroke-dasharray="0.8 0.28" fill="none"/><path d="M1351.3 150.44h18.9" stroke="#4ec9b0" stroke-width="1.15" stroke-dasharray="0.8 0.28" fill="none"/><path d="M1347.1 152.31h2.1" stroke="#d4d4d4" stroke-width="1.15" stroke-dasharray="0.8 0.28" fill="none"/><path d="M1345.0 154.18h1.1" stroke="#d4d4d4" stroke-width="1.15" stroke-dasharray="0.8 0.28" fill="none"/><path d="M1345.0 156.05h1.1" stroke="#d4d4d4" stroke-width="1.15" stroke-dasharray="0.8 0.28" fill="none"/><path d="M1345.0 159.79h5.2" stroke="#569cd6" stroke-width="1.15" stroke-dasharray="0.8 0.28" fill="none"/><path d="M1351.3 159.79h8.4" stroke="#dcdcaa" stroke-width="1.15" stroke-dasharray="0.8 0.28" fill="none"/><path d="M1360.8 159.79h1.1" stroke="#d4d4d4" stroke-width="1.15" stroke-dasharray="0.8 0.28" fill="none"/><path d="M1362.8 159.79h4.2" stroke="#dcdcaa" stroke-width="1.15" stroke-dasharray="0.8 0.28" fill="none"/><path d="M1368.1 159.79h12.6" stroke="#d4d4d4" stroke-width="1.15" stroke-dasharray="0.8 0.28" fill="none"/><path d="M1381.8 159.79h2.1" stroke="#569cd6" stroke-width="1.15" stroke-dasharray="0.8 0.28" fill="none"/><path d="M1384.9 159.79h1.1" stroke="#d4d4d4" stroke-width="1.15" stroke-dasharray="0.8 0.28" fill="none"/><path d="M1347.1 161.66h6.3" stroke="#c586c0" stroke-width="1.15" stroke-dasharray="0.8 0.28" fill="none"/><path d="M1354.4 161.66h5.2" stroke="#9cdcfe" stroke-width="1.15" stroke-dasharray="0.8 0.28" fill="none"/><path d="M1345.0 163.53h1.1" stroke="#d4d4d4" stroke-width="1.15" stroke-dasharray="0.8 0.28" fill="none"/><path d="M1345.0 165.40h2.1" stroke="#d4d4d4" stroke-width="1.15" stroke-dasharray="0.8 0.28" fill="none"/><path d="M1347.1 167.27h4.2" stroke="#9cdcfe" stroke-width="1.15" stroke-dasharray="0.8 0.28" fill="none"/><path d="M1352.3 167.27h10.5" stroke="#ce9178" stroke-width="1.15" stroke-dasharray="0.8 0.28" fill="none"/><path d="M1347.1 169.14h11.6" stroke="#9cdcfe" stroke-width="1.15" stroke-dasharray="0.8 0.28" fill="none"/><path d="M1359.7 169.14h21.0" stroke="#ce9178" stroke-width="1.15" stroke-dasharray="0.8 0.28" fill="none"/><path d="M1347.1 171.01h6.3" stroke="#9cdcfe" stroke-width="1.15" stroke-dasharray="0.8 0.28" fill="none"/><path d="M1354.4 171.01h8.4" stroke="#4ec9b0" stroke-width="1.15" stroke-dasharray="0.8 0.28" fill="none"/><path d="M1349.2 172.88h1.1" stroke="#9cdcfe" stroke-width="1.15" stroke-dasharray="0.8 0.28" fill="none"/><path d="M1351.3 172.88h18.9" stroke="#4ec9b0" stroke-width="1.15" stroke-dasharray="0.8 0.28" fill="none"/><path d="M1349.2 174.75h1.1" stroke="#9cdcfe" stroke-width="1.15" stroke-dasharray="0.8 0.28" fill="none"/><path d="M1351.3 174.75h18.9" stroke="#4ec9b0" stroke-width="1.15" stroke-dasharray="0.8 0.28" fill="none"/><path d="M1347.1 176.62h2.1" stroke="#d4d4d4" stroke-width="1.15" stroke-dasharray="0.8 0.28" fill="none"/><path d="M1345.0 178.49h1.1" stroke="#d4d4d4" stroke-width="1.15" stroke-dasharray="0.8 0.28" fill="none"/><path d="M1345.0 180.36h1.1" stroke="#d4d4d4" stroke-width="1.15" stroke-dasharray="0.8 0.28" fill="none"/><path d="M1345.0 184.11h5.2" stroke="#569cd6" stroke-width="1.15" stroke-dasharray="0.8 0.28" fill="none"/><path d="M1351.3 184.11h6.3" stroke="#dcdcaa" stroke-width="1.15" stroke-dasharray="0.8 0.28" fill="none"/><path d="M1358.6 184.11h1.1" stroke="#d4d4d4" stroke-width="1.15" stroke-dasharray="0.8 0.28" fill="none"/><path d="M1360.7 184.11h4.2" stroke="#dcdcaa" stroke-width="1.15" stroke-dasharray="0.8 0.28" fill="none"/><path d="M1366.0 184.11h12.6" stroke="#d4d4d4" stroke-width="1.15" stroke-dasharray="0.8 0.28" fill="none"/><path d="M1379.6 184.11h2.1" stroke="#569cd6" stroke-width="1.15" stroke-dasharray="0.8 0.28" fill="none"/><path d="M1382.8 184.11h1.1" stroke="#d4d4d4" stroke-width="1.15" stroke-dasharray="0.8 0.28" fill="none"/><path d="M1347.1 185.98h6.3" stroke="#c586c0" stroke-width="1.15" stroke-dasharray="0.8 0.28" fill="none"/><path d="M1354.4 185.98h5.2" stroke="#9cdcfe" stroke-width="1.15" stroke-dasharray="0.8 0.28" fill="none"/><path d="M1345.0 187.85h1.1" stroke="#d4d4d4" stroke-width="1.15" stroke-dasharray="0.8 0.28" fill="none"/><path d="M1345.0 189.72h2.1" stroke="#d4d4d4" stroke-width="1.15" stroke-dasharray="0.8 0.28" fill="none"/><path d="M1347.1 191.59h4.2" stroke="#9cdcfe" stroke-width="1.15" stroke-dasharray="0.8 0.28" fill="none"/><path d="M1352.3 191.59h8.4" stroke="#ce9178" stroke-width="1.15" stroke-dasharray="0.8 0.28" fill="none"/><path d="M1347.1 193.46h11.6" stroke="#9cdcfe" stroke-width="1.15" stroke-dasharray="0.8 0.28" fill="none"/><path d="M1359.7 193.46h18.9" stroke="#ce9178" stroke-width="1.15" stroke-dasharray="0.8 0.28" fill="none"/><path d="M1347.1 195.33h6.3" stroke="#9cdcfe" stroke-width="1.15" stroke-dasharray="0.8 0.28" fill="none"/><path d="M1354.4 195.33h8.4" stroke="#4ec9b0" stroke-width="1.15" stroke-dasharray="0.8 0.28" fill="none"/><path d="M1349.2 197.20h1.1" stroke="#9cdcfe" stroke-width="1.15" stroke-dasharray="0.8 0.28" fill="none"/><path d="M1351.3 197.20h18.9" stroke="#4ec9b0" stroke-width="1.15" stroke-dasharray="0.8 0.28" fill="none"/><path d="M1349.2 199.07h1.1" stroke="#9cdcfe" stroke-width="1.15" stroke-dasharray="0.8 0.28" fill="none"/><path d="M1351.3 199.07h18.9" stroke="#4ec9b0" stroke-width="1.15" stroke-dasharray="0.8 0.28" fill="none"/><path d="M1347.1 200.94h2.1" stroke="#d4d4d4" stroke-width="1.15" stroke-dasharray="0.8 0.28" fill="none"/><path d="M1345.0 202.81h1.1" stroke="#d4d4d4" stroke-width="1.15" stroke-dasharray="0.8 0.28" fill="none"/><path d="M1345.0 204.68h1.1" stroke="#d4d4d4" stroke-width="1.15" stroke-dasharray="0.8 0.28" fill="none"/><path d="M1345.0 210.29h23.1" stroke="#6a9955" stroke-width="1.15" stroke-dasharray="0.8 0.28" fill="none"/><path d="M1345.0 212.16h5.2" stroke="#569cd6" stroke-width="1.15" stroke-dasharray="0.8 0.28" fill="none"/><path d="M1351.3 212.16h5.2" stroke="#4fc1ff" stroke-width="1.15" stroke-dasharray="0.8 0.28" fill="none"/><path d="M1357.6 212.16h1.1" stroke="#d4d4d4" stroke-width="1.15" stroke-dasharray="0.8 0.28" fill="none"/><path d="M1359.7 212.16h16.8" stroke="#d4d4d4" stroke-width="1.15" stroke-dasharray="0.8 0.28" fill="none"/><path d="M1345.0 217.77h18.9" stroke="#6a9955" stroke-width="1.15" stroke-dasharray="0.8 0.28" fill="none"/><path d="M1345.0 219.64h5.2" stroke="#569cd6" stroke-width="1.15" stroke-dasharray="0.8 0.28" fill="none"/><path d="M1351.3 219.64h10.5" stroke="#4fc1ff" stroke-width="1.15" stroke-dasharray="0.8 0.28" fill="none"/><path d="M1362.8 219.64h1.1" stroke="#d4d4d4" stroke-width="1.15" stroke-dasharray="0.8 0.28" fill="none"/><path d="M1347.1 221.51h3.2" stroke="#9cdcfe" stroke-width="1.15" stroke-dasharray="0.8 0.28" fill="none"/><path d="M1351.3 221.51h3.2" stroke="#d4d4d4" stroke-width="1.15" stroke-dasharray="0.8 0.28" fill="none"/><path d="M1347.1 223.38h8.4" stroke="#9cdcfe" stroke-width="1.15" stroke-dasharray="0.8 0.28" fill="none"/><path d="M1356.5 223.38h3.2" stroke="#d4d4d4" stroke-width="1.15" stroke-dasharray="0.8 0.28" fill="none"/><path d="M1347.1 225.25h6.3" stroke="#9cdcfe" stroke-width="1.15" stroke-dasharray="0.8 0.28" fill="none"/><path d="M1354.4 225.25h6.3" stroke="#d4d4d4" stroke-width="1.15" stroke-dasharray="0.8 0.28" fill="none"/><path d="M1345.0 227.12h1.1" stroke="#d4d4d4" stroke-width="1.15" stroke-dasharray="0.8 0.28" fill="none"/><path d="M1345.0 228.99h5.2" stroke="#569cd6" stroke-width="1.15" stroke-dasharray="0.8 0.28" fill="none"/><path d="M1351.3 228.99h14.7" stroke="#4fc1ff" stroke-width="1.15" stroke-dasharray="0.8 0.28" fill="none"/><path d="M1367.0 228.99h1.1" stroke="#d4d4d4" stroke-width="1.15" stroke-dasharray="0.8 0.28" fill="none"/><path d="M1369.1 228.99h16.8" stroke="#dcdcaa" stroke-width="1.15" stroke-dasharray="0.8 0.28" fill="none"/><path d="M1345.0 232.74h5.2" stroke="#569cd6" stroke-width="1.15" stroke-dasharray="0.8 0.28" fill="none"/><path d="M1351.3 232.74h5.2" stroke="#4fc1ff" stroke-width="1.15" stroke-dasharray="0.8 0.28" fill="none"/><path d="M1357.6 232.74h1.1" stroke="#d4d4d4" stroke-width="1.15" stroke-dasharray="0.8 0.28" fill="none"/><path d="M1359.7 232.74h5.2" stroke="#c586c0" stroke-width="1.15" stroke-dasharray="0.8 0.28" fill="none"/><path d="M1366.0 232.74h14.7" stroke="#dcdcaa" stroke-width="1.15" stroke-dasharray="0.8 0.28" fill="none"/><path d="M1345.0 234.61h5.2" stroke="#569cd6" stroke-width="1.15" stroke-dasharray="0.8 0.28" fill="none"/><path d="M1351.3 234.61h13.7" stroke="#4fc1ff" stroke-width="1.15" stroke-dasharray="0.8 0.28" fill="none"/><path d="M1366.0 234.61h1.1" stroke="#d4d4d4" stroke-width="1.15" stroke-dasharray="0.8 0.28" fill="none"/><path d="M1368.1 234.61h5.2" stroke="#c586c0" stroke-width="1.15" stroke-dasharray="0.8 0.28" fill="none"/><path d="M1374.4 234.61h18.9" stroke="#dcdcaa" stroke-width="1.15" stroke-dasharray="0.8 0.28" fill="none"/><path d="M1345.0 238.35h5.2" stroke="#569cd6" stroke-width="1.15" stroke-dasharray="0.8 0.28" fill="none"/><path d="M1351.3 238.35h9.5" stroke="#dcdcaa" stroke-width="1.15" stroke-dasharray="0.8 0.28" fill="none"/><path d="M1361.8 238.35h1.1" stroke="#d4d4d4" stroke-width="1.15" stroke-dasharray="0.8 0.28" fill="none"/><path d="M1363.9 238.35h4.2" stroke="#dcdcaa" stroke-width="1.15" stroke-dasharray="0.8 0.28" fill="none"/><path d="M1369.1 238.35h8.4" stroke="#d4d4d4" stroke-width="1.15" stroke-dasharray="0.8 0.28" fill="none"/><path d="M1378.6 238.35h11.6" stroke="#ce9178" stroke-width="1.15" stroke-dasharray="0.8 0.28" fill="none"/><path d="M1391.2 238.35h2.1" stroke="#d4d4d4" stroke-width="1.15" stroke-dasharray="0.8 0.28" fill="none"/><path d="M1394.3 238.35h5.2" stroke="#569cd6" stroke-width="1.15" stroke-dasharray="0.8 0.28" fill="none"/><path d="M1400.6 238.35h10.5" stroke="#9cdcfe" stroke-width="1.15" stroke-dasharray="0.8 0.28" fill="none"/><path d="M1412.2 238.35h2.1" stroke="#569cd6" stroke-width="1.15" stroke-dasharray="0.8 0.28" fill="none"/><path d="M1415.3 238.35h1.1" stroke="#d4d4d4" stroke-width="1.15" stroke-dasharray="0.8 0.28" fill="none"/><path d="M1347.1 240.22h6.3" stroke="#c586c0" stroke-width="1.15" stroke-dasharray="0.8 0.28" fill="none"/><path d="M1354.4 240.22h13.7" stroke="#dcdcaa" stroke-width="1.15" stroke-dasharray="0.8 0.28" fill="none"/><path d="M1369.1 240.22h7.4" stroke="#d4d4d4" stroke-width="1.15" stroke-dasharray="0.8 0.28" fill="none"/><path d="M1349.2 242.09h11.6" stroke="#4ec9b0" stroke-width="1.15" stroke-dasharray="0.8 0.28" fill="none"/><path d="M1361.8 242.09h1.1" stroke="#d4d4d4" stroke-width="1.15" stroke-dasharray="0.8 0.28" fill="none"/><path d="M1351.3 243.96h1.1" stroke="#d4d4d4" stroke-width="1.15" stroke-dasharray="0.8 0.28" fill="none"/><path d="M1353.4 243.96h6.3" stroke="#4ec9b0" stroke-width="1.15" stroke-dasharray="0.8 0.28" fill="none"/><path d="M1360.7 243.96h10.5" stroke="#ce9178" stroke-width="1.15" stroke-dasharray="0.8 0.28" fill="none"/><path d="M1372.3 243.96h5.2" stroke="#4ec9b0" stroke-width="1.15" stroke-dasharray="0.8 0.28" fill="none"/><path d="M1378.6 243.96h4.2" stroke="#9cdcfe" stroke-width="1.15" stroke-dasharray="0.8 0.28" fill="none"/><path d="M1383.8 243.96h10.5" stroke="#4ec9b0" stroke-width="1.15" stroke-dasharray="0.8 0.28" fill="none"/><path d="M1395.4 243.96h18.9" stroke="#ce9178" stroke-width="1.15" stroke-dasharray="0.8 0.28" fill="none"/><path d="M1415.3 243.96h2.1" stroke="#d4d4d4" stroke-width="1.15" stroke-dasharray="0.8 0.28" fill="none"/><path d="M1418.5 243.96h2.1" stroke="#9cdcfe" stroke-width="1.15" stroke-dasharray="0.8 0.28" fill="none"/><path d="M1421.6 243.96h1.1" stroke="#9cdcfe" stroke-width="1.15" stroke-dasharray="0.8 0.28" fill="none"/><path d="M1423.7 243.96h1.1" stroke="#d4d4d4" stroke-width="1.15" stroke-dasharray="0.8 0.28" fill="none"/><path d="M1349.2 245.83h1.1" stroke="#d4d4d4" stroke-width="1.15" stroke-dasharray="0.8 0.28" fill="none"/><path d="M1349.2 247.70h11.6" stroke="#9cdcfe" stroke-width="1.15" stroke-dasharray="0.8 0.28" fill="none"/><path d="M1347.1 249.57h1.1" stroke="#d4d4d4" stroke-width="1.15" stroke-dasharray="0.8 0.28" fill="none"/><path d="M1345.0 251.44h2.1" stroke="#d4d4d4" stroke-width="1.15" stroke-dasharray="0.8 0.28" fill="none"/><path d="M1345.0 255.18h5.2" stroke="#569cd6" stroke-width="1.15" stroke-dasharray="0.8 0.28" fill="none"/><path d="M1351.3 255.18h8.4" stroke="#dcdcaa" stroke-width="1.15" stroke-dasharray="0.8 0.28" fill="none"/><path d="M1360.8 255.18h1.1" stroke="#d4d4d4" stroke-width="1.15" stroke-dasharray="0.8 0.28" fill="none"/><path d="M1362.8 255.18h4.2" stroke="#dcdcaa" stroke-width="1.15" stroke-dasharray="0.8 0.28" fill="none"/><path d="M1368.1 255.18h8.4" stroke="#d4d4d4" stroke-width="1.15" stroke-dasharray="0.8 0.28" fill="none"/><path d="M1377.5 255.18h10.5" stroke="#ce9178" stroke-width="1.15" stroke-dasharray="0.8 0.28" fill="none"/><path d="M1389.1 255.18h2.1" stroke="#d4d4d4" stroke-width="1.15" stroke-dasharray="0.8 0.28" fill="none"/><path d="M1392.2 255.18h5.2" stroke="#569cd6" stroke-width="1.15" stroke-dasharray="0.8 0.28" fill="none"/><path d="M1398.5 255.18h10.5" stroke="#9cdcfe" stroke-width="1.15" stroke-dasharray="0.8 0.28" fill="none"/><path d="M1410.1 255.18h2.1" stroke="#569cd6" stroke-width="1.15" stroke-dasharray="0.8 0.28" fill="none"/><path d="M1413.2 255.18h1.1" stroke="#d4d4d4" stroke-width="1.15" stroke-dasharray="0.8 0.28" fill="none"/><path d="M1347.1 257.05h6.3" stroke="#c586c0" stroke-width="1.15" stroke-dasharray="0.8 0.28" fill="none"/><path d="M1354.4 257.05h4.2" stroke="#4fc1ff" stroke-width="1.15" stroke-dasharray="0.8 0.28" fill="none"/><path d="M1359.7 257.05h16.8" stroke="#dcdcaa" stroke-width="1.15" stroke-dasharray="0.8 0.28" fill="none"/><path d="M1345.0 258.92h2.1" stroke="#d4d4d4" stroke-width="1.15" stroke-dasharray="0.8 0.28" fill="none"/><path d="M1345.0 262.66h5.2" stroke="#569cd6" stroke-width="1.15" stroke-dasharray="0.8 0.28" fill="none"/><path d="M1351.3 262.66h5.2" stroke="#4fc1ff" stroke-width="1.15" stroke-dasharray="0.8 0.28" fill="none"/><path d="M1357.6 262.66h1.1" stroke="#d4d4d4" stroke-width="1.15" stroke-dasharray="0.8 0.28" fill="none"/><path d="M1359.7 262.66h10.5" stroke="#dcdcaa" stroke-width="1.15" stroke-dasharray="0.8 0.28" fill="none"/><path d="M1371.2 262.66h8.4" stroke="#d4d4d4" stroke-width="1.15" stroke-dasharray="0.8 0.28" fill="none"/><path d="M1380.7 262.66h7.4" stroke="#ce9178" stroke-width="1.15" stroke-dasharray="0.8 0.28" fill="none"/><path d="M1389.1 262.66h2.1" stroke="#d4d4d4" stroke-width="1.15" stroke-dasharray="0.8 0.28" fill="none"/><path d="M1392.2 262.66h5.2" stroke="#569cd6" stroke-width="1.15" stroke-dasharray="0.8 0.28" fill="none"/><path d="M1398.5 262.66h10.5" stroke="#9cdcfe" stroke-width="1.15" stroke-dasharray="0.8 0.28" fill="none"/><path d="M1410.1 262.66h2.1" stroke="#569cd6" stroke-width="1.15" stroke-dasharray="0.8 0.28" fill="none"/><path d="M1413.2 262.66h1.1" stroke="#d4d4d4" stroke-width="1.15" stroke-dasharray="0.8 0.28" fill="none"/><path d="M1347.1 264.53h3.2" stroke="#569cd6" stroke-width="1.15" stroke-dasharray="0.8 0.28" fill="none"/><path d="M1351.3 264.53h13.7" stroke="#9cdcfe" stroke-width="1.15" stroke-dasharray="0.8 0.28" fill="none"/><path d="M1366.0 264.53h1.1" stroke="#d4d4d4" stroke-width="1.15" stroke-dasharray="0.8 0.28" fill="none"/><path d="M1368.1 264.53h5.2" stroke="#c586c0" stroke-width="1.15" stroke-dasharray="0.8 0.28" fill="none"/><path d="M1374.4 264.53h19.9" stroke="#dcdcaa" stroke-width="1.15" stroke-dasharray="0.8 0.28" fill="none"/><path d="M1347.1 268.27h5.2" stroke="#c586c0" stroke-width="1.15" stroke-dasharray="0.8 0.28" fill="none"/><path d="M1353.4 268.27h6.3" stroke="#569cd6" stroke-width="1.15" stroke-dasharray="0.8 0.28" fill="none"/><path d="M1360.7 268.27h1.1" stroke="#d4d4d4" stroke-width="1.15" stroke-dasharray="0.8 0.28" fill="none"/><path d="M1349.2 270.14h2.1" stroke="#c586c0" stroke-width="1.15" stroke-dasharray="0.8 0.28" fill="none"/><path d="M1352.4 270.14h31.5" stroke="#9cdcfe" stroke-width="1.15" stroke-dasharray="0.8 0.28" fill="none"/><path d="M1384.9 270.14h1.1" stroke="#d4d4d4" stroke-width="1.15" stroke-dasharray="0.8 0.28" fill="none"/><path d="M1351.3 272.01h5.2" stroke="#c586c0" stroke-width="1.15" stroke-dasharray="0.8 0.28" fill="none"/><path d="M1349.2 273.88h1.1" stroke="#d4d4d4" stroke-width="1.15" stroke-dasharray="0.8 0.28" fill="none"/><path d="M1349.2 277.62h16.8" stroke="#6a9955" stroke-width="1.15" stroke-dasharray="0.8 0.28" fill="none"/><path d="M1349.2 279.49h5.2" stroke="#569cd6" stroke-width="1.15" stroke-dasharray="0.8 0.28" fill="none"/><path d="M1355.5 279.49h11.6" stroke="#4fc1ff" stroke-width="1.15" stroke-dasharray="0.8 0.28" fill="none"/><path d="M1368.1 279.49h1.1" stroke="#d4d4d4" stroke-width="1.15" stroke-dasharray="0.8 0.28" fill="none"/><path d="M1370.2 279.49h5.2" stroke="#c586c0" stroke-width="1.15" stroke-dasharray="0.8 0.28" fill="none"/><path d="M1376.5 279.49h12.6" stroke="#4ec9b0" stroke-width="1.15" stroke-dasharray="0.8 0.28" fill="none"/><path d="M1351.3 281.36h29.4" stroke="#9cdcfe" stroke-width="1.15" stroke-dasharray="0.8 0.28" fill="none"/><path d="M1381.8 281.36h2.1" stroke="#569cd6" stroke-width="1.15" stroke-dasharray="0.8 0.28" fill="none"/><path d="M1384.9 281.36h23.1" stroke="#dcdcaa" stroke-width="1.15" stroke-dasharray="0.8 0.28" fill="none"/><path d="M1349.2 283.24h1.1" stroke="#d4d4d4" stroke-width="1.15" stroke-dasharray="0.8 0.28" fill="none"/><path d="M1349.2 285.11h8.4" stroke="#9cdcfe" stroke-width="1.15" stroke-dasharray="0.8 0.28" fill="none"/><path d="M1358.7 285.11h1.1" stroke="#d4d4d4" stroke-width="1.15" stroke-dasharray="0.8 0.28" fill="none"/><path d="M1360.8 285.11h23.1" stroke="#dcdcaa" stroke-width="1.15" stroke-dasharray="0.8 0.28" fill="none"/><path d="M1384.9 285.11h31.5" stroke="#9cdcfe" stroke-width="1.15" stroke-dasharray="0.8 0.28" fill="none"/><path d="M1349.2 286.98h13.7" stroke="#9cdcfe" stroke-width="1.15" stroke-dasharray="0.8 0.28" fill="none"/><path d="M1363.9 286.98h1.1" stroke="#d4d4d4" stroke-width="1.15" stroke-dasharray="0.8 0.28" fill="none"/><path d="M1366.0 286.98h5.2" stroke="#c586c0" stroke-width="1.15" stroke-dasharray="0.8 0.28" fill="none"/><path d="M1372.3 286.98h19.9" stroke="#dcdcaa" stroke-width="1.15" stroke-dasharray="0.8 0.28" fill="none"/><path d="M1347.1 288.85h1.1" stroke="#d4d4d4" stroke-width="1.15" stroke-dasharray="0.8 0.28" fill="none"/><path d="M1347.1 292.59h6.3" stroke="#c586c0" stroke-width="1.15" stroke-dasharray="0.8 0.28" fill="none"/><path d="M1354.4 292.59h8.4" stroke="#9cdcfe" stroke-width="1.15" stroke-dasharray="0.8 0.28" fill="none"/><path d="M1345.0 294.46h2.1" stroke="#d4d4d4" stroke-width="1.15" stroke-dasharray="0.8 0.28" fill="none"/><path d="M1345.0 298.20h5.2" stroke="#569cd6" stroke-width="1.15" stroke-dasharray="0.8 0.28" fill="none"/><path d="M1351.3 298.20h6.3" stroke="#4fc1ff" stroke-width="1.15" stroke-dasharray="0.8 0.28" fill="none"/><path d="M1358.6 298.20h1.1" stroke="#d4d4d4" stroke-width="1.15" stroke-dasharray="0.8 0.28" fill="none"/><path d="M1360.7 298.20h5.2" stroke="#c586c0" stroke-width="1.15" stroke-dasharray="0.8 0.28" fill="none"/><path d="M1367.0 298.20h12.6" stroke="#dcdcaa" stroke-width="1.15" stroke-dasharray="0.8 0.28" fill="none"/><path d="M1380.7 298.20h16.8" stroke="#4ec9b0" stroke-width="1.15" stroke-dasharray="0.8 0.28" fill="none"/><path d="M1398.5 298.20h14.7" stroke="#ce9178" stroke-width="1.15" stroke-dasharray="0.8 0.28" fill="none"/><path d="M1414.3 298.20h3.2" stroke="#d4d4d4" stroke-width="1.15" stroke-dasharray="0.8 0.28" fill="none"/><path d="M1345.0 301.94h3.2" stroke="#c586c0" stroke-width="1.15" stroke-dasharray="0.8 0.28" fill="none"/><path d="M1349.2 301.94h6.3" stroke="#569cd6" stroke-width="1.15" stroke-dasharray="0.8 0.28" fill="none"/><path d="M1356.5 301.94h7.4" stroke="#4fc1ff" stroke-width="1.15" stroke-dasharray="0.8 0.28" fill="none"/><path d="M1365.0 301.94h2.1" stroke="#569cd6" stroke-width="1.15" stroke-dasharray="0.8 0.28" fill="none"/><path d="M1368.1 301.94h7.4" stroke="#4fc1ff" stroke-width="1.15" stroke-dasharray="0.8 0.28" fill="none"/><path d="M1376.5 301.94h1.1" stroke="#d4d4d4" stroke-width="1.15" stroke-dasharray="0.8 0.28" fill="none"/><path d="M1347.1 303.81h11.6" stroke="#dcdcaa" stroke-width="1.15" stroke-dasharray="0.8 0.28" fill="none"/><path d="M1359.7 303.81h23.1" stroke="#9cdcfe" stroke-width="1.15" stroke-dasharray="0.8 0.28" fill="none"/><path d="M1383.8 303.81h18.9" stroke="#9cdcfe" stroke-width="1.15" stroke-dasharray="0.8 0.28" fill="none"/><path d="M1345.0 305.68h1.1" stroke="#d4d4d4" stroke-width="1.15" stroke-dasharray="0.8 0.28" fill="none"/></g></svg>
<span class="a t" style="top:833px;line-height:18px;height:18px;color:#9d9d9d;font-family:'Liberation Sans','Noto Sans CJK SC',sans-serif;font-size:12.4px;font-weight:400;letter-spacing:-0.123px;left:415.10px;">PROBLEMS</span>
<span class="a t" style="top:833px;line-height:18px;height:18px;color:#e7e7e7;font-family:'Liberation Sans','Noto Sans CJK SC',sans-serif;font-size:12.4px;font-weight:400;letter-spacing:-0.065px;left:511.20px;">TERMINAL</span>
<span class="a t" style="top:833px;line-height:18px;height:18px;color:#9d9d9d;font-family:'Liberation Sans','Noto Sans CJK SC',sans-serif;font-size:12.4px;font-weight:400;letter-spacing:0.253px;left:601.60px;">OUTPUT</span>
<span class="a t" style="top:833px;line-height:18px;height:18px;color:#9d9d9d;font-family:'Liberation Sans','Noto Sans CJK SC',sans-serif;font-size:12.4px;font-weight:400;letter-spacing:0.008px;left:681.50px;">DEBUG CONSOLE</span>
<span class="a t" style="top:833px;line-height:18px;height:18px;color:#9d9d9d;font-family:'Liberation Sans','Noto Sans CJK SC',sans-serif;font-size:12.4px;font-weight:400;letter-spacing:-0.222px;left:817.40px;">PORTS</span>
<span class="a t" style="top:833px;line-height:18px;height:18px;color:#9d9d9d;font-family:'Liberation Sans','Noto Sans CJK SC',sans-serif;font-size:12.4px;font-weight:400;letter-spacing:-0.139px;left:887.40px;">GITLENS</span>
<span class="a t" style="top:833px;line-height:18px;height:18px;color:#9d9d9d;font-family:'Liberation Sans','Noto Sans CJK SC',sans-serif;font-size:12.4px;font-weight:400;letter-spacing:-0.184px;left:967.80px;">SPELL CHECKER</span>
<div class="a" style="left:508.60px;top:853.00px;width:67.40px;height:1.30px;background:#0078d4;"></div>
<svg class="a" style="left:1186.25px;top:832.65px;" width="17.50" height="17.50" viewBox="0 0 16 16"><g fill="none" stroke="#cccccc" stroke-width="1.12" stroke-linecap="round" stroke-linejoin="round"><rect x="1.5" y="2" width="13" height="12" rx="1.5"/><path d="M4.5 5.5 L7.5 8.5 L4.5 11.5 M8.5 11.5 H11.5"/></g></svg>
<span class="a t" style="top:831px;line-height:19px;height:19px;color:#cccccc;font-family:'Liberation Sans','Noto Sans CJK SC',sans-serif;font-size:13.5px;font-weight:400;letter-spacing:-0.108px;left:1208.80px;">zsh</span>
<svg class="a" style="left:1241.25px;top:832.55px;" width="17.50" height="17.50" viewBox="0 0 16 16"><g fill="none" stroke="#cccccc" stroke-width="1.12" stroke-linecap="round" stroke-linejoin="round"><path d="M8 2.5 V13.5 M2.5 8 H13.5"/></g></svg>
<svg class="a" style="left:1262.75px;top:835.85px;" width="11.50" height="11.50" viewBox="0 0 16 16"><g fill="none" stroke="#cccccc" stroke-width="1.34" stroke-linecap="round" stroke-linejoin="round"><path d="M3.2 6 L8 10.8 L12.8 6"/></g></svg>
<svg class="a" style="left:1286.30px;top:832.40px;" width="18.00" height="18.00" viewBox="0 0 16 16"><g fill="none" stroke="#cccccc" stroke-width="1.12" stroke-linecap="round" stroke-linejoin="round"><rect x="2" y="2.5" width="12" height="11" rx="1.2"/><path d="M8 2.5 V13.5"/></g></svg>
<svg class="a" style="left:1315.60px;top:832.20px;" width="18.00" height="18.00" viewBox="0 0 16 16"><g fill="none" stroke="#cccccc" stroke-width="1.12" stroke-linecap="round" stroke-linejoin="round"><path d="M2.5 4 H13.5 M6 4 V2.5 H10 V4 M3.8 4 L4.5 14 H11.5 L12.2 4 M6.5 6.5 V11.5 M9.5 6.5 V11.5"/></g></svg>
<svg class="a" style="left:1344.60px;top:832.30px;" width="18.00" height="18.00" viewBox="0 0 16 16"><g fill="none" stroke="#cccccc" stroke-width="1.12" stroke-linecap="round" stroke-linejoin="round"><circle cx="3.5" cy="8" r="1" fill="#cccccc" stroke="none"/><circle cx="8" cy="8" r="1" fill="#cccccc" stroke="none"/><circle cx="12.5" cy="8" r="1" fill="#cccccc" stroke="none"/></g></svg>
<div class="a" style="left:1376.20px;top:832.00px;width:1.00px;height:19.00px;background:#4a4a4a;"></div>
<svg class="a" style="left:1389.60px;top:832.30px;" width="18.00" height="18.00" viewBox="0 0 16 16"><g fill="none" stroke="#cccccc" stroke-width="1.12" stroke-linecap="round" stroke-linejoin="round"><path d="M2.5 5.5 V3.5 Q2.5 2.5 3.5 2.5 H5.5 M10.5 2.5 H12.5 Q13.5 2.5 13.5 3.5 V5.5 M13.5 10.5 V12.5 Q13.5 13.5 12.5 13.5 H10.5 M5.5 13.5 H3.5 Q2.5 13.5 2.5 12.5 V10.5"/></g></svg>
<svg class="a" style="left:1420.35px;top:833.05px;" width="16.50" height="16.50" viewBox="0 0 16 16"><g fill="none" stroke="#cccccc" stroke-width="1.12" stroke-linecap="round" stroke-linejoin="round"><path d="M3.5 3.5 L12.5 12.5 M12.5 3.5 L3.5 12.5"/></g></svg>
<div class="a" style="left:400.40px;top:877.80px;width:8.40px;height:8.40px;background:#3b8fc4;border-radius:5px;"></div>
<span class="a t" style="top:873px;line-height:18px;height:18px;color:#3fc89a;font-family:'DejaVu Sans','Liberation Sans',sans-serif;font-size:11.5px;font-weight:700;left:415.00px;">➜</span>
<span class="a t" style="top:873px;line-height:19px;height:19px;color:#d4d4d4;font-family:'DejaVu Sans Mono','Noto Sans CJK SC','Liberation Mono',monospace;font-size:13.29px;font-weight:400;letter-spacing:-0.001px;left:439.00px;"><b style="color:#4fb9dd">langgraph-learning</b> <b style="color:#4390e6">git:(</b><b style="color:#ea6560">main</b><b style="color:#4390e6">)</b> ll</span>
<span class="a t" style="top:889px;line-height:19px;height:19px;color:#d4d4d4;font-family:'DejaVu Sans Mono','Noto Sans CJK SC','Liberation Mono',monospace;font-size:13.29px;font-weight:400;letter-spacing:-0.001px;left:415.20px;">total 64</span>
<span class="a t" style="top:905px;line-height:19px;height:19px;color:#d4d4d4;font-family:'DejaVu Sans Mono','Noto Sans CJK SC','Liberation Mono',monospace;font-size:13.29px;font-weight:400;letter-spacing:-0.001px;left:415.20px;">-rw-r--r--   1 wfp  staff    19B Oct 21 09:56 README.md</span>
<span class="a t" style="top:921px;line-height:19px;height:19px;color:#d4d4d4;font-family:'DejaVu Sans Mono','Noto Sans CJK SC','Liberation Mono',monospace;font-size:13.29px;font-weight:400;letter-spacing:-0.001px;left:415.20px;">drwxr-xr-x  33 wfp  staff   1.0K Oct 21 09:57 <b style="color:#4fb9dd">node_modules</b></span>
<span class="a t" style="top:937px;line-height:19px;height:19px;color:#d4d4d4;font-family:'DejaVu Sans Mono','Noto Sans CJK SC','Liberation Mono',monospace;font-size:13.29px;font-weight:400;letter-spacing:-0.001px;left:415.20px;">-rw-r--r--   1 wfp  staff    20K Oct 21 09:58 package-lock.json</span>
<span class="a t" style="top:953px;line-height:19px;height:19px;color:#d4d4d4;font-family:'DejaVu Sans Mono','Noto Sans CJK SC','Liberation Mono',monospace;font-size:13.29px;font-weight:400;letter-spacing:-0.001px;left:415.20px;">-rw-r--r--   1 wfp  staff   516B Oct 21 11:32 package.json</span>
<span class="a t" style="top:969px;line-height:19px;height:19px;color:#d4d4d4;font-family:'DejaVu Sans Mono','Noto Sans CJK SC','Liberation Mono',monospace;font-size:13.29px;font-weight:400;letter-spacing:-0.001px;left:415.20px;">drwxr-xr-x   5 wfp  staff   160B Oct 23 14:07 <b style="color:#4fb9dd">src</b></span>
<div class="a" style="left:400.40px;top:989.80px;width:8.40px;height:8.40px;background:#3b8fc4;border-radius:5px;"></div>
<span class="a t" style="top:985px;line-height:18px;height:18px;color:#3fc89a;font-family:'DejaVu Sans','Liberation Sans',sans-serif;font-size:11.5px;font-weight:700;left:415.00px;">➜</span>
<span class="a t" style="top:985px;line-height:19px;height:19px;color:#d4d4d4;font-family:'DejaVu Sans Mono','Noto Sans CJK SC','Liberation Mono',monospace;font-size:13.29px;font-weight:400;letter-spacing:-0.001px;left:439.00px;"><b style="color:#4fb9dd">langgraph-learning</b> <b style="color:#4390e6">git:(</b><b style="color:#ea6560">main</b><b style="color:#4390e6">)</b> ll</span>
<span class="a t" style="top:1001px;line-height:19px;height:19px;color:#d4d4d4;font-family:'DejaVu Sans Mono','Noto Sans CJK SC','Liberation Mono',monospace;font-size:13.29px;font-weight:400;letter-spacing:-0.001px;left:415.20px;">total 64</span>
<span class="a t" style="top:1017px;line-height:19px;height:19px;color:#d4d4d4;font-family:'DejaVu Sans Mono','Noto Sans CJK SC','Liberation Mono',monospace;font-size:13.29px;font-weight:400;letter-spacing:-0.001px;left:415.20px;">-rw-r--r--   1 wfp  staff    19B Oct 21 09:56 README.md</span>
<span class="a t" style="top:1033px;line-height:19px;height:19px;color:#d4d4d4;font-family:'DejaVu Sans Mono','Noto Sans CJK SC','Liberation Mono',monospace;font-size:13.29px;font-weight:400;letter-spacing:-0.001px;left:415.20px;">drwxr-xr-x  33 wfp  staff   1.0K Oct 21 09:57 <b style="color:#4fb9dd">node_modules</b></span>
<span class="a t" style="top:1049px;line-height:19px;height:19px;color:#d4d4d4;font-family:'DejaVu Sans Mono','Noto Sans CJK SC','Liberation Mono',monospace;font-size:13.29px;font-weight:400;letter-spacing:-0.001px;left:415.20px;">-rw-r--r--   1 wfp  staff    20K Oct 21 09:58 package-lock.json</span>
<span class="a t" style="top:1065px;line-height:19px;height:19px;color:#d4d4d4;font-family:'DejaVu Sans Mono','Noto Sans CJK SC','Liberation Mono',monospace;font-size:13.29px;font-weight:400;letter-spacing:-0.001px;left:415.20px;">-rw-r--r--   1 wfp  staff   516B Oct 21 11:32 package.json</span>
<span class="a t" style="top:1081px;line-height:19px;height:19px;color:#d4d4d4;font-family:'DejaVu Sans Mono','Noto Sans CJK SC','Liberation Mono',monospace;font-size:13.29px;font-weight:400;letter-spacing:-0.001px;left:415.20px;">drwxr-xr-x   5 wfp  staff   160B Oct 23 14:07 <b style="color:#4fb9dd">src</b></span>
<div class="a" style="left:400.50px;top:1101.90px;width:8.20px;height:8.20px;border:1.3px solid #6a6a6a;box-sizing:border-box;border-radius:5px;"></div>
<span class="a t" style="top:1097px;line-height:18px;height:18px;color:#3fc89a;font-family:'DejaVu Sans','Liberation Sans',sans-serif;font-size:11.5px;font-weight:700;left:415.00px;">➜</span>
<span class="a t" style="top:1097px;line-height:19px;height:19px;color:#d4d4d4;font-family:'DejaVu Sans Mono','Noto Sans CJK SC','Liberation Mono',monospace;font-size:13.29px;font-weight:400;letter-spacing:-0.001px;left:439.00px;"><b style="color:#4fb9dd">langgraph-learning</b> <b style="color:#4390e6">git:(</b><b style="color:#ea6560">main</b><b style="color:#4390e6">)</b> </span>
<div class="a" style="left:679.40px;top:1098.10px;width:7.60px;height:15.40px;background:#d0d0d0;"></div>
<div class="a" style="left:1438.80px;top:873.60px;width:6.00px;height:7.00px;background:#3a88bd;"></div>
<div class="a" style="left:1438.80px;top:978.00px;width:6.00px;height:15.00px;background:#3a88bd;"></div>
<div class="a" style="left:1438.80px;top:1091.00px;width:6.00px;height:12.60px;background:#6a6a6a;"></div>
<div class="a" style="left:0.00px;top:1226.60px;width:38.80px;height:24.40px;background:#3a7fd5;"></div>
<svg class="a" style="left:10.45px;top:1229.85px;" width="17.50" height="17.50" viewBox="0 0 16 16"><g fill="none" stroke="#ffffff" stroke-width="1.23" stroke-linecap="round" stroke-linejoin="round"><path d="M3.4 6 L7.8 9.7 L3.4 13.6 M12.3 2 L8.3 6 L12.3 9.6" /></g></svg>
<svg class="a" style="left:46.60px;top:1229.90px;" width="18.00" height="18.00" viewBox="0 0 16 16"><g fill="none" stroke="#cccccc" stroke-width="1.12" stroke-linecap="round" stroke-linejoin="round"><circle cx="4.6" cy="3.4" r="1.5"/><circle cx="4.6" cy="12.6" r="1.5"/><circle cx="11.4" cy="5.6" r="1.5"/><path d="M4.6 4.9 V11.1 M11.4 7.1 Q11.4 9.4 8.4 9.4 Q4.8 9.4 4.6 11"/></g></svg>
<span class="a t" style="top:1229px;line-height:19px;height:19px;color:#cccccc;font-family:'Liberation Sans','Noto Sans CJK SC',sans-serif;font-size:13.6px;font-weight:400;letter-spacing:0.277px;left:67.90px;">main</span>
<svg class="a" style="left:104.60px;top:1229.90px;" width="18.00" height="18.00" viewBox="0 0 16 16"><g fill="none" stroke="#cccccc" stroke-width="1.12" stroke-linecap="round" stroke-linejoin="round"><path d="M2.6 7.4 A5.4 5.4 0 0 1 12.4 4.6 M13.4 8.6 A5.4 5.4 0 0 1 3.6 11.4 M12.6 1.8 V4.8 H9.6 M3.4 14.2 V11.2 H6.4"/></g></svg>
<svg class="a" style="left:138.40px;top:1229.90px;" width="18.00" height="18.00" viewBox="0 0 16 16"><g fill="none" stroke="#cccccc" stroke-width="1.12" stroke-linecap="round" stroke-linejoin="round"><circle cx="4" cy="12.6" r="1.4"/><circle cx="8" cy="3.2" r="1.4"/><circle cx="12" cy="9.4" r="1.4"/><path d="M8 4.6 V14 M4 11.2 V7 Q4 5.4 6 5.2 M12 8 V5.6 M12 10.8 V12 Q12 13.4 9.6 13.6"/></g></svg>
<svg class="a" style="left:172.40px;top:1229.90px;" width="18.00" height="18.00" viewBox="0 0 16 16"><g fill="none" stroke="#cccccc" stroke-width="1.12" stroke-linecap="round" stroke-linejoin="round"><path d="M13.8 2.2 Q9.4 2.2 6.6 6 L4.4 9.2 L6.8 11.6 L10 9.4 Q13.8 6.6 13.8 2.2 Z M6.4 6.4 L3.2 6.6 L1.8 8.6 L4.4 9 M9.6 9.8 L9.4 12.8 L7.4 14.2 L7 11.6 M4 11.2 L2.4 13.6 L4.8 12.2"/><circle cx="10.4" cy="5.6" r="1.1"/></g></svg>
<svg class="a" style="left:189.95px;top:1230.45px;" width="16.90" height="16.90" viewBox="0 0 16 16"><g fill="none" stroke="#cccccc" stroke-width="1.12" stroke-linecap="round" stroke-linejoin="round"><path d="M9.4 2.8 L13.2 6.6 M10.6 4 L12.6 2 M12 5.4 L14 3.4 M9 3.4 L6.2 6.2 Q4.6 8 6.2 9.8 Q8 11.4 9.8 9.8 L12.6 7 M6 10 L2.4 13.6"/></g></svg>
<span class="a t" style="top:1229px;line-height:19px;height:19px;color:#cccccc;font-family:'Liberation Sans','Noto Sans CJK SC',sans-serif;font-size:13.6px;font-weight:400;letter-spacing:0.502px;left:210.10px;">Launchpad</span>
<svg class="a" style="left:298.60px;top:1229.90px;" width="18.00" height="18.00" viewBox="0 0 16 16"><g fill="none" stroke="#cccccc" stroke-width="1.12" stroke-linecap="round" stroke-linejoin="round"><circle cx="8" cy="8" r="6"/><path d="M5.6 5.6 L10.4 10.4 M10.4 5.6 L5.6 10.4"/></g></svg>
<span class="a t" style="top:1229px;line-height:19px;height:19px;color:#cccccc;font-family:'Liberation Sans','Noto Sans CJK SC',sans-serif;font-size:13.6px;font-weight:400;letter-spacing:-0.162px;left:319.80px;">0</span>
<svg class="a" style="left:331.30px;top:1229.90px;" width="18.00" height="18.00" viewBox="0 0 16 16"><g fill="none" stroke="#cccccc" stroke-width="1.12" stroke-linecap="round" stroke-linejoin="round"><path d="M8 2 L14.4 13.6 H1.6 Z M8 6.4 V10"/><circle cx="8" cy="11.8" r="0.5" fill="#cccccc"/></g></svg>
<span class="a t" style="top:1229px;line-height:19px;height:19px;color:#cccccc;font-family:'Liberation Sans','Noto Sans CJK SC',sans-serif;font-size:13.6px;font-weight:400;letter-spacing:0.237px;left:352.20px;">0</span>
<span class="a t" style="top:1229px;line-height:19px;height:19px;color:#cccccc;font-family:'Liberation Sans','Noto Sans CJK SC',sans-serif;font-size:13.6px;font-weight:400;letter-spacing:0.295px;left:378.90px;">Git Graph</span>
<svg class="a" style="left:1273.45px;top:1228.55px;" width="19.50" height="19.50" viewBox="0 0 16 16"><g fill="none" stroke="#cccccc" stroke-width="1.06" stroke-linecap="round" stroke-linejoin="round"><circle cx="8" cy="8.2" r="2.9"/><path d="M8 1.6 V5.3 M8 11.1 V14.6"/></g></svg>
<span class="a t" style="top:1229px;line-height:19px;height:19px;color:#cccccc;font-family:'Liberation Sans','Noto Sans CJK SC',sans-serif;font-size:13.6px;font-weight:400;letter-spacing:0.341px;left:1295.40px;">双越 (4 days ago)</span>
<span class="a t" style="top:1229px;line-height:19px;height:19px;color:#cccccc;font-family:'Liberation Sans','Noto Sans CJK SC',sans-serif;font-size:13.6px;font-weight:400;letter-spacing:0.399px;left:1426.00px;">Ln 83, Col 3</span>
<span class="a t" style="top:1229px;line-height:19px;height:19px;color:#cccccc;font-family:'Liberation Sans','Noto Sans CJK SC',sans-serif;font-size:13.6px;font-weight:400;letter-spacing:0.366px;left:1522.90px;">Spaces: 2</span>
<span class="a t" style="top:1229px;line-height:19px;height:19px;color:#cccccc;font-family:'Liberation Sans','Noto Sans CJK SC',sans-serif;font-size:13.6px;font-weight:400;letter-spacing:0.696px;left:1605.00px;">UTF-8</span>
<span class="a t" style="top:1229px;line-height:19px;height:19px;color:#cccccc;font-family:'Liberation Sans','Noto Sans CJK SC',sans-serif;font-size:13.6px;font-weight:400;letter-spacing:-0.075px;left:1664.80px;">LF</span>
<svg class="a" style="left:1699.05px;top:1230.45px;" width="16.90" height="16.90" viewBox="0 0 16 16"><g fill="none" stroke="#cccccc" stroke-width="1.12" stroke-linecap="round" stroke-linejoin="round"><path d="M5.6 2.4 Q3.8 2.4 3.8 4 V6.2 Q3.8 7.8 2.4 8 Q3.8 8.2 3.8 9.8 V12 Q3.8 13.6 5.6 13.6 M10.4 2.4 Q12.2 2.4 12.2 4 V6.2 Q12.2 7.8 13.6 8 Q12.2 8.2 12.2 9.8 V12 Q12.2 13.6 10.4 13.6"/></g></svg>
<span class="a t" style="top:1229px;line-height:19px;height:19px;color:#cccccc;font-family:'Liberation Sans','Noto Sans CJK SC',sans-serif;font-size:13.6px;font-weight:400;letter-spacing:0.437px;left:1721.90px;">JavaScript</span>
<svg class="a" style="left:1806.95px;top:1229.65px;" width="18.50" height="18.50" viewBox="0 0 16 16"><g fill="none" stroke="#cccccc" stroke-width="1.12" stroke-linecap="round" stroke-linejoin="round"><path d="M3 8.4 V5.8 Q3 3 6 3 Q8 3 8 5 Q8 3 10 3 Q13 3 13 5.8 V8.4 M3.4 7.6 Q1.6 8.6 1.6 10 V11.4 Q4.4 13.6 8 13.6 Q11.6 13.6 14.4 11.4 V10 Q14.4 8.6 12.6 7.6 M6.4 9.6 V11 M9.6 9.6 V11"/><path d="M3.4 5 Q3.4 3.4 5.4 3.4 Q7.4 3.4 7.4 5 Q7.4 7 5.4 7 Q3.4 7 3.4 5 Z M8.6 5 Q8.6 3.4 10.6 3.4 Q12.6 3.4 12.6 5 Q12.6 7 10.6 7 Q8.6 7 8.6 5 Z"/></g></svg>
<svg class="a" style="left:1841.30px;top:1230.20px;" width="17.40" height="17.40" viewBox="0 0 16 16"><g fill="none" stroke="#cccccc" stroke-width="1.12" stroke-linecap="round" stroke-linejoin="round"><circle cx="8" cy="6.4" r="1.6"/><path d="M8 8 L6.2 14 M8 8 L9.8 14 M4.9 9.6 A4.4 4.4 0 1 1 11.1 9.6 M3.2 11.6 A6.8 6.8 0 1 1 12.8 11.6" /></g></svg>
<span class="a t" style="top:1229px;line-height:19px;height:19px;color:#cccccc;font-family:'Liberation Sans','Noto Sans CJK SC',sans-serif;font-size:13.6px;font-weight:400;letter-spacing:0.057px;left:1862.60px;">Go Live</span>
<svg class="a" style="left:1927.30px;top:1230.20px;" width="17.40" height="17.40" viewBox="0 0 16 16"><g fill="none" stroke="#cccccc" stroke-width="1.12" stroke-linecap="round" stroke-linejoin="round"><path d="M1.4 9 L4 11.8 L9.6 4.4 M7 10.4 L8.4 11.8 L14.2 4.4"/></g></svg>
<span class="a t" style="top:1229px;line-height:19px;height:19px;color:#cccccc;font-family:'Liberation Sans','Noto Sans CJK SC',sans-serif;font-size:13.6px;font-weight:400;letter-spacing:0.367px;left:1949.20px;">Prettier</span>
<svg class="a" style="left:2014.40px;top:1229.90px;" width="18.00" height="18.00" viewBox="0 0 16 16"><g fill="none" stroke="#cccccc" stroke-width="1.12" stroke-linecap="round" stroke-linejoin="round"><path d="M8.6 2.4 Q4.2 2.2 4.2 7 V10.6 L2.8 12.4 H13.2 L11.8 10.6 V8.4 M6.8 12.6 Q8 14.6 9.2 12.6"/><circle cx="11.8" cy="4" r="2.2" fill="#cccccc" stroke="none"/></g></svg>
<div class="a" style="left:1475.00px;top:60.00px;width:554.50px;height:201.80px;background:#1f1f1f;border:1px solid #303030;box-sizing:border-box;border-radius:5px;"></div>
<span class="a t" style="top:71px;line-height:20px;height:20px;color:#cccccc;font-family:'DejaVu Sans Mono','Noto Sans CJK SC','Liberation Mono',monospace;font-size:13.7px;font-weight:400;letter-spacing:0.003px;left:1518.20px;">Model --&gt;|无 tool_calls| Finish</span>
<span class="a t" style="top:90px;line-height:20px;height:20px;color:#cccccc;font-family:'DejaVu Sans Mono','Noto Sans CJK SC','Liberation Mono',monospace;font-size:13.7px;font-weight:400;letter-spacing:0.003px;left:1518.20px;">Finish --&gt; Output</span>
<span class="a t" style="top:129px;line-height:20px;height:20px;color:#cccccc;font-family:'DejaVu Sans Mono','Noto Sans CJK SC','Liberation Mono',monospace;font-size:13.7px;font-weight:400;letter-spacing:0.003px;left:1518.20px;width:502.79999999999995px;overflow:hidden;">style Input fill:#1a2332,stroke:#4a5568,stroke-width:2px,color:#fff</span>
<span class="a t" style="top:148px;line-height:20px;height:20px;color:#cccccc;font-family:'DejaVu Sans Mono','Noto Sans CJK SC','Liberation Mono',monospace;font-size:13.7px;font-weight:400;letter-spacing:0.003px;left:1518.20px;width:502.79999999999995px;overflow:hidden;">style Output fill:#1a2332,stroke:#4a5568,stroke-width:2px,color:#fff</span>
<span class="a t" style="top:168px;line-height:20px;height:20px;color:#cccccc;font-family:'DejaVu Sans Mono','Noto Sans CJK SC','Liberation Mono',monospace;font-size:13.7px;font-weight:400;letter-spacing:0.003px;left:1518.20px;width:502.79999999999995px;overflow:hidden;">style Model fill:#e0e7ff,stroke:#818cf8,stroke-width:2px,color:#000</span>
<span class="a t" style="top:187px;line-height:20px;height:20px;color:#cccccc;font-family:'DejaVu Sans Mono','Noto Sans CJK SC','Liberation Mono',monospace;font-size:13.7px;font-weight:400;letter-spacing:0.003px;left:1518.20px;width:502.79999999999995px;overflow:hidden;">style Action fill:#9ca3af,stroke:#6b7280,stroke-width:2px,color:#000</span>
<span class="a t" style="top:207px;line-height:20px;height:20px;color:#cccccc;font-family:'DejaVu Sans Mono','Noto Sans CJK SC','Liberation Mono',monospace;font-size:13.7px;font-weight:400;letter-spacing:0.003px;left:1518.20px;width:502.79999999999995px;overflow:hidden;">style Observation fill:#9ca3af,stroke:#6b7280,stroke-width:2px,color:#000</span>
<span class="a t" style="top:226px;line-height:20px;height:20px;color:#cccccc;font-family:'DejaVu Sans Mono','Noto Sans CJK SC','Liberation Mono',monospace;font-size:13.7px;font-weight:400;letter-spacing:0.003px;left:1518.20px;width:502.79999999999995px;overflow:hidden;">style Finish fill:#9ca3af,stroke:#6b7280,stroke-width:2px,color:#000</span>
<div class="a" style="left:1456.00px;top:39.50px;width:592.00px;height:40.50px;background:#181818;box-shadow:0 2px 4px rgba(0,0,0,0.6);"></div>
<span class="a t" style="top:51px;line-height:18px;height:18px;color:#e7e7e7;font-family:'Liberation Sans','Noto Sans CJK SC',sans-serif;font-size:12.4px;font-weight:400;letter-spacing:-0.311px;left:1478.90px;">CHAT</span>
<div class="a" style="left:1476.60px;top:71.80px;width:38.60px;height:1.30px;background:#0078d4;"></div>
<svg class="a" style="left:1848.50px;top:50.30px;" width="18.60" height="18.60" viewBox="0 0 16 16"><g fill="none" stroke="#cccccc" stroke-width="1.12" stroke-linecap="round" stroke-linejoin="round"><path d="M8 2.5 V13.5 M2.5 8 H13.5"/></g></svg>
<svg class="a" style="left:1878.80px;top:50.30px;" width="18.60" height="18.60" viewBox="0 0 16 16"><g fill="none" stroke="#cccccc" stroke-width="1.12" stroke-linecap="round" stroke-linejoin="round"><path d="M2.6 6.2 A5.8 5.8 0 1 1 2.2 8.5 M2.4 2.8 V6.3 H5.9 M8 4.8 V8.3 L10.3 10.3"/></g></svg>
<svg class="a" style="left:1908.20px;top:50.30px;" width="18.60" height="18.60" viewBox="0 0 16 16"><g fill="none" stroke="#cccccc" stroke-width="1.12" stroke-linecap="round" stroke-linejoin="round"><circle cx="8" cy="8" r="1.9"/><path d="M6.9 1.7 h2.2 l.35 1.75 l1.2 .5 l1.5-1 l1.55 1.55 l-1 1.5 l.5 1.2 l1.75 .35 v2.2 l-1.75 .35 l-.5 1.2 l1 1.5 l-1.55 1.55 l-1.5-1 l-1.2 .5 l-.35 1.75 h-2.2 l-.35-1.75 l-1.2-.5 l-1.5 1 l-1.55-1.55 l1-1.5 l-.5-1.2 l-1.75-.35 v-2.2 l1.75-.35 l.5-1.2 l-1-1.5 l1.55-1.55 l1.5 1 l1.2-.5 z"/></g></svg>
<svg class="a" style="left:1938.25px;top:50.45px;" width="18.30" height="18.30" viewBox="0 0 16 16"><g fill="none" stroke="#cccccc" stroke-width="1.12" stroke-linecap="round" stroke-linejoin="round"><circle cx="3.5" cy="8" r="1" fill="#cccccc" stroke="none"/><circle cx="8" cy="8" r="1" fill="#cccccc" stroke="none"/><circle cx="12.5" cy="8" r="1" fill="#cccccc" stroke="none"/></g></svg>
<div class="a" style="left:1969.50px;top:51.00px;width:1.00px;height:18.00px;background:#4a4a4a;"></div>
<svg class="a" style="left:1983.00px;top:50.60px;" width="18.00" height="18.00" viewBox="0 0 16 16"><g fill="none" stroke="#cccccc" stroke-width="1.12" stroke-linecap="round" stroke-linejoin="round"><path d="M2.5 5.5 V3.5 Q2.5 2.5 3.5 2.5 H5.5 M10.5 2.5 H12.5 Q13.5 2.5 13.5 3.5 V5.5 M13.5 10.5 V12.5 Q13.5 13.5 12.5 13.5 H10.5 M5.5 13.5 H3.5 Q2.5 13.5 2.5 12.5 V10.5"/></g></svg>
<svg class="a" style="left:2013.65px;top:51.35px;" width="16.50" height="16.50" viewBox="0 0 16 16"><g fill="none" stroke="#cccccc" stroke-width="1.12" stroke-linecap="round" stroke-linejoin="round"><path d="M3.5 3.5 L12.5 12.5 M12.5 3.5 L3.5 12.5"/></g></svg>
<span class="a t" style="top:281px;line-height:24px;height:24px;color:#d8d8d8;font-family:'Liberation Sans','Noto Sans CJK SC',sans-serif;font-size:18.0px;font-weight:700;letter-spacing:0.000px;left:1475.00px;">流程图说明</span>
<div class="a" style="left:1474.60px;top:315.00px;width:14.60px;height:14.60px;background:radial-gradient(circle at 40% 28%, #5aa5f5 0%, #1f6fe0 55%, #1554b8 100%);border-radius:7.3px;"></div>
<span class="a t" style="top:313px;line-height:20px;height:20px;color:#dddddd;font-family:'Liberation Sans','Noto Sans CJK SC',sans-serif;font-size:14.87px;font-weight:700;letter-spacing:-0.052px;left:1493.50px;">input（开始）</span>
<div class="a" style="left:1488.50px;top:356.70px;width:4.80px;height:4.80px;background:#d0d0d0;border-radius:2.4px;"></div>
<span class="a t" style="top:349px;line-height:20px;height:20px;color:#d0d0d0;font-family:'Liberation Sans','Noto Sans CJK SC',sans-serif;font-size:14.87px;font-weight:400;letter-spacing:0.314px;left:1502.10px;">用户输入消息，如 "Add 3 and 4"</span>
<div class="a" style="left:1488.50px;top:379.10px;width:4.80px;height:4.80px;background:#d0d0d0;border-radius:2.4px;"></div>
<span class="a t" style="top:371px;line-height:20px;height:20px;color:#d0d0d0;font-family:'Liberation Sans','Noto Sans CJK SC',sans-serif;font-size:14.87px;font-weight:400;letter-spacing:-0.351px;left:1502.10px;">进入 START 节点</span>
<svg class="a" style="left:1474.60px;top:409.20px;" width="14.60" height="13.60" viewBox="0 0 16 16"><path d="M3.4 1 H12.6 L15.6 5.4 L8 15 L0.4 5.4 Z" fill="#4fb6e8"/><path d="M3.4 1 L5.6 5.4 H0.4 Z M12.6 1 L10.4 5.4 H15.6 Z" fill="#9fe0f8"/><path d="M5.6 5.4 H10.4 L8 15 Z" fill="#2f8fd0"/><path d="M3.4 1 H12.6 L10.4 5.4 H5.6 Z" fill="#d5f3fc"/></svg>
<span class="a t" style="top:406px;line-height:20px;height:20px;color:#dddddd;font-family:'Liberation Sans','Noto Sans CJK SC',sans-serif;font-size:14.87px;font-weight:700;letter-spacing:0.007px;left:1493.50px;">model（LLM 模型）</span>
<div class="a" style="left:1488.50px;top:450.80px;width:4.80px;height:4.80px;background:#d0d0d0;border-radius:2.4px;"></div>
<span class="a t" style="top:443px;line-height:20px;height:20px;color:#d0d0d0;font-family:'Liberation Sans','Noto Sans CJK SC',sans-serif;font-size:14.87px;font-weight:400;letter-spacing:0.071px;left:1502.10px;"><b>llmCall</b> 节点调用 DeepSeek 模型</span>
<div class="a" style="left:1488.50px;top:473.10px;width:4.80px;height:4.80px;background:#d0d0d0;border-radius:2.4px;"></div>
<span class="a t" style="top:465px;line-height:20px;height:20px;color:#d0d0d0;font-family:'Liberation Sans','Noto Sans CJK SC',sans-serif;font-size:14.87px;font-weight:400;letter-spacing:0.288px;left:1502.10px;">模型绑定了 3 个工具：add、multiply、divide</span>
<div class="a" style="left:1488.50px;top:495.30px;width:4.80px;height:4.80px;background:#d0d0d0;border-radius:2.4px;"></div>
<span class="a t" style="top:488px;line-height:20px;height:20px;color:#d0d0d0;font-family:'Liberation Sans','Noto Sans CJK SC',sans-serif;font-size:14.87px;font-weight:400;letter-spacing:-0.093px;left:1502.10px;">模型决定是否需要调用工具</span>
<div class="a" style="left:1475.20px;top:525.30px;width:13.60px;height:13.60px;background:linear-gradient(180deg,#565656 0%,#2c2c2c 16%,#060606 42%,#000 100%);border-radius:1.5px;"></div>
<span class="a t" style="top:522px;line-height:20px;height:20px;color:#dddddd;font-family:'Liberation Sans','Noto Sans CJK SC',sans-serif;font-size:14.87px;font-weight:700;letter-spacing:0.083px;left:1493.50px;">action（执行动作）</span>
<div class="a" style="left:1488.50px;top:565.90px;width:4.80px;height:4.80px;background:#d0d0d0;border-radius:2.4px;"></div>
<span class="a t" style="top:558px;line-height:20px;height:20px;color:#d0d0d0;font-family:'Liberation Sans','Noto Sans CJK SC',sans-serif;font-size:14.87px;font-weight:400;letter-spacing:0.027px;left:1502.10px;"><b>toolNode</b> 节点执行具体的工具调用</span>
<div class="a" style="left:1488.50px;top:588.70px;width:4.80px;height:4.80px;background:#d0d0d0;border-radius:2.4px;"></div>
<span class="a t" style="top:581px;line-height:20px;height:20px;color:#d0d0d0;font-family:'Liberation Sans','Noto Sans CJK SC',sans-serif;font-size:14.87px;font-weight:400;letter-spacing:0.125px;left:1502.10px;">根据模型返回的 tool_calls 执行相应工具</span>
<div class="a" style="left:1475.20px;top:619.10px;width:13.60px;height:13.60px;background:linear-gradient(180deg,#565656 0%,#2c2c2c 16%,#060606 42%,#000 100%);border-radius:1.5px;"></div>
<span class="a t" style="top:616px;line-height:20px;height:20px;color:#dddddd;font-family:'Liberation Sans','Noto Sans CJK SC',sans-serif;font-size:14.87px;font-weight:700;letter-spacing:0.134px;left:1493.50px;">observation（观察结果）</span>
<div class="a" style="left:1488.50px;top:659.90px;width:4.80px;height:4.80px;background:#d0d0d0;border-radius:2.4px;"></div>
<span class="a t" style="top:652px;line-height:20px;height:20px;color:#d0d0d0;font-family:'Liberation Sans','Noto Sans CJK SC',sans-serif;font-size:14.87px;font-weight:400;letter-spacing:-0.049px;left:1502.10px;">工具执行完成，返回计算结果</span>
<div class="a" style="left:1488.50px;top:682.70px;width:4.80px;height:4.80px;background:#d0d0d0;border-radius:2.4px;"></div>
<span class="a t" style="top:675px;line-height:20px;height:20px;color:#d0d0d0;font-family:'Liberation Sans','Noto Sans CJK SC',sans-serif;font-size:14.87px;font-weight:400;letter-spacing:-0.093px;left:1502.10px;">结果作为新消息反馈给模型</span>
<div class="a" style="left:1475.20px;top:712.80px;width:13.60px;height:13.60px;background:linear-gradient(180deg,#565656 0%,#2c2c2c 16%,#060606 42%,#000 100%);border-radius:1.5px;"></div>
<span class="a t" style="top:710px;line-height:20px;height:20px;color:#dddddd;font-family:'Liberation Sans','Noto Sans CJK SC',sans-serif;font-size:14.87px;font-weight:700;letter-spacing:-0.004px;left:1493.50px;">finish（完成判断）</span>
<div class="a" style="left:1488.50px;top:753.80px;width:4.80px;height:4.80px;background:#d0d0d0;border-radius:2.4px;"></div>
<span class="a t" style="top:746px;line-height:20px;height:20px;color:#d0d0d0;font-family:'Liberation Sans','Noto Sans CJK SC',sans-serif;font-size:14.87px;font-weight:400;letter-spacing:0.106px;left:1502.10px;"><b>shouldContinue</b> 函数判断流程</span>
<div class="a" style="left:1488.50px;top:776.30px;width:4.80px;height:4.80px;background:#d0d0d0;border-radius:2.4px;"></div>
<span class="a t" style="top:769px;line-height:20px;height:20px;color:#d0d0d0;font-family:'Liberation Sans','Noto Sans CJK SC',sans-serif;font-size:14.87px;font-weight:400;letter-spacing:-0.104px;left:1502.10px;">如果无需工具调用，则流程结束</span>
<div class="a" style="left:1474.60px;top:805.50px;width:14.60px;height:14.60px;background:radial-gradient(circle at 40% 28%, #5aa5f5 0%, #1f6fe0 55%, #1554b8 100%);border-radius:7.3px;"></div>
<span class="a t" style="top:803px;line-height:20px;height:20px;color:#dddddd;font-family:'Liberation Sans','Noto Sans CJK SC',sans-serif;font-size:14.87px;font-weight:700;letter-spacing:0.209px;left:1493.50px;">output（输出）</span>
<div class="a" style="left:1488.50px;top:847.10px;width:4.80px;height:4.80px;background:#d0d0d0;border-radius:2.4px;"></div>
<span class="a t" style="top:839px;line-height:20px;height:20px;color:#d0d0d0;font-family:'Liberation Sans','Noto Sans CJK SC',sans-serif;font-size:14.87px;font-weight:400;letter-spacing:-0.144px;left:1502.10px;">返回最终答案给用户</span>
<div class="a" style="left:1488.50px;top:869.70px;width:4.80px;height:4.80px;background:#d0d0d0;border-radius:2.4px;"></div>
<span class="a t" style="top:862px;line-height:20px;height:20px;color:#d0d0d0;font-family:'Liberation Sans','Noto Sans CJK SC',sans-serif;font-size:14.87px;font-weight:400;letter-spacing:-0.184px;left:1502.10px;">流程结束</span>
<span class="a t" style="top:901px;line-height:24px;height:24px;color:#d8d8d8;font-family:'Liberation Sans','Noto Sans CJK SC',sans-serif;font-size:18.0px;font-weight:700;letter-spacing:0.000px;left:1475.00px;">核心循环</span>
<div class="a" style="left:1475.00px;top:932.60px;width:554.50px;height:44.00px;background:#1f1f1f;border:1px solid #303030;box-sizing:border-box;border-radius:5px;"></div>
<span class="a t" style="top:944px;line-height:20px;height:20px;color:#cccccc;font-family:'DejaVu Sans Mono','Noto Sans CJK SC','Liberation Mono',monospace;font-size:13.7px;font-weight:400;letter-spacing:0.003px;left:1484.30px;">model → action → observation → model</span>
<span class="a t" style="top:997px;line-height:20px;height:20px;color:#d0d0d0;font-family:'Liberation Sans','Noto Sans CJK SC',sans-serif;font-size:14.87px;font-weight:400;letter-spacing:0.062px;left:1475.00px;">这是一个 <b>ReAct 循环</b>（推理-行动循环），直到模型认为不再需要工具调用为止。</span>
<span class="a t" style="top:1038px;line-height:20px;height:20px;color:#d0d0d0;font-family:'Liberation Sans','Noto Sans CJK SC',sans-serif;font-size:14.87px;font-weight:400;letter-spacing:-0.149px;left:1475.00px;">这个流程图完全符合您提供的样式！</span>
<svg class="a" style="left:1477.40px;top:1068.50px;" width="18.80" height="18.80" viewBox="0 0 16 16"><g fill="none" stroke="#cccccc" stroke-width="1.12" stroke-linecap="round" stroke-linejoin="round"><path d="M4.2 3.6 A5.6 5.6 0 1 0 8 2.4 M4.6 1.2 L4.2 3.8 L6.8 4.2"/></g></svg>
<svg class="a" style="left:1507.20px;top:1068.50px;" width="18.80" height="18.80" viewBox="0 0 16 16"><g fill="none" stroke="#cccccc" stroke-width="1.12" stroke-linecap="round" stroke-linejoin="round"><path d="M3 2.5 V6.5 H7 M3.2 6.3 C5 3 10 2.6 11.8 5.4 C13.4 8 11.6 11 7.2 14"/></g></svg>
<svg class="a" style="left:1536.80px;top:1068.50px;" width="18.80" height="18.80" viewBox="0 0 16 16"><g fill="none" stroke="#cccccc" stroke-width="1.12" stroke-linecap="round" stroke-linejoin="round"><path d="M5 7 L7.6 2 Q9.6 2.2 9.2 4.4 L8.8 6.4 H12.6 Q13.8 6.6 13.6 7.8 L12.6 12.6 Q12.3 13.6 11.2 13.6 H5 Z M5 7 H2.4 V13.6 H5"/></g></svg>
<svg class="a" style="left:1566.20px;top:1068.50px;" width="18.80" height="18.80" viewBox="0 0 16 16"><g fill="none" stroke="#cccccc" stroke-width="1.12" stroke-linecap="round" stroke-linejoin="round"><path d="M11 9 L8.4 14 Q6.4 13.8 6.8 11.6 L7.2 9.6 H3.4 Q2.2 9.4 2.4 8.2 L3.4 3.4 Q3.7 2.4 4.8 2.4 H11 Z M11 9 H13.6 V2.4 H11"/></g></svg>
<div class="a" style="left:1475.00px;top:1103.20px;width:554.50px;height:104.40px;background:#2a2a2a;border:1px solid #343434;box-sizing:border-box;border-radius:6px;"></div>
<div class="a" style="left:1482.40px;top:1111.20px;width:22.80px;height:22.40px;border:1px solid #4a4a4a;box-sizing:border-box;border-radius:5px;"></div>
<svg class="a" style="left:1484.30px;top:1112.70px;" width="19.00" height="19.00" viewBox="0 0 16 16"><g fill="none" stroke="#cccccc" stroke-width="1.06" stroke-linecap="round" stroke-linejoin="round"><path d="M5.4 7 V10.6 Q5.4 13.4 8 13.4 Q10.6 13.4 10.6 10.6 V4.8 Q10.6 2.6 8.7 2.6 Q6.8 2.6 6.8 4.8 V10.4 Q6.8 11.6 8 11.6 Q9.2 11.6 9.2 10.4 V6"/></g></svg>
<div class="a" style="left:1510.00px;top:1111.20px;width:113.20px;height:22.40px;border:1px dashed #4e4e4e;box-sizing:border-box;border-radius:5px;"></div>
<span class="a t" style="top:1115px;line-height:15px;height:15px;color:#cbcb41;font-family:'Liberation Sans','Noto Sans CJK SC',sans-serif;font-size:10.0px;font-weight:400;left:1520.40px;transform:scaleX(1.020);transform-origin:left center;-webkit-text-stroke:0.45px currentColor;">JS</span>
<span class="a t" style="top:1112px;line-height:19px;height:19px;color:#cccccc;font-family:'Liberation Sans','Noto Sans CJK SC',sans-serif;font-size:13.4px;font-weight:400;font-style:italic;letter-spacing:0.163px;left:1538.40px;">graph2.js</span>
<svg class="a" style="left:1602.10px;top:1114.90px;" width="15.00" height="15.00" viewBox="0 0 16 16"><g fill="none" stroke="#cccccc" stroke-width="1.12" stroke-linecap="round" stroke-linejoin="round"><path d="M8 2.5 V13.5 M2.5 8 H13.5"/></g></svg>
<span class="a t" style="top:1145px;line-height:20px;height:20px;color:#8b8b8b;font-family:'Liberation Sans','Noto Sans CJK SC',sans-serif;font-size:14.7px;font-weight:400;letter-spacing:0.403px;left:1482.40px;">Add context (#), extensions (@), commands (/)</span>
<span class="a t" style="top:1177px;line-height:19px;height:19px;color:#cccccc;font-family:'Liberation Sans','Noto Sans CJK SC',sans-serif;font-size:13.4px;font-weight:400;letter-spacing:-0.175px;left:1489.70px;">Agent</span>
<svg class="a" style="left:1528.00px;top:1181.70px;" width="11.00" height="11.00" viewBox="0 0 16 16"><g fill="none" stroke="#cccccc" stroke-width="1.34" stroke-linecap="round" stroke-linejoin="round"><path d="M3.2 6 L8 10.8 L12.8 6"/></g></svg>
<span class="a t" style="top:1177px;line-height:19px;height:19px;color:#cccccc;font-family:'Liberation Sans','Noto Sans CJK SC',sans-serif;font-size:13.4px;font-weight:400;letter-spacing:-0.096px;left:1556.80px;">Claude Sonnet 4.5</span>
<svg class="a" style="left:1670.00px;top:1181.70px;" width="11.00" height="11.00" viewBox="0 0 16 16"><g fill="none" stroke="#cccccc" stroke-width="1.34" stroke-linecap="round" stroke-linejoin="round"><path d="M3.2 6 L8 10.8 L12.8 6"/></g></svg>
<svg class="a" style="left:1955.40px;top:1177.60px;" width="18.00" height="18.00" viewBox="0 0 16 16"><g fill="none" stroke="#cccccc" stroke-width="1.12" stroke-linecap="round" stroke-linejoin="round"><path d="M2.5 2.5 L5 3.2 L6 5.6 L13 12.6 L12.4 13.4 L5.2 6.4 L3 5.4 Z M13.4 2.6 L10.6 5.4 M11 2.2 Q13.6 1.8 13.8 5 M9 8 L3 13.6 M11.6 6.2 L10 7.4"/></g></svg>
<svg class="a" style="left:1984.50px;top:1177.80px;" width="18.00" height="18.00" viewBox="0 0 16 16"><g fill="none" stroke="#cccccc" stroke-width="1.12" stroke-linecap="round" stroke-linejoin="round"><path d="M2 2.6 L14.2 8 L2 13.4 L4 8 Z M4 8 H9"/></g></svg>
<svg class="a" style="left:2007.50px;top:1183.00px;" width="10.00" height="10.00" viewBox="0 0 16 16"><g fill="none" stroke="#cccccc" stroke-width="1.34" stroke-linecap="round" stroke-linejoin="round"><path d="M3.2 6 L8 10.8 L12.8 6"/></g></svg>
<span class="a t" style="top:1190px;line-height:31px;height:31px;color:rgba(255,255,255,0.88);font-family:'Liberation Sans','Noto Sans CJK SC',sans-serif;font-size:24.0px;font-weight:400;letter-spacing:0.557px;left:1681.30px;text-shadow:0 0 2px rgba(0,0,0,0.55);">掘金技术社区 @ 前端双越老师</span>
<div class="a" style="left:0.00px;top:0.00px;width:2048.00px;height:1.10px;background:#7a7a7a;"></div>
<div class="a" style="left:0.00px;top:96.00px;width:1.00px;height:1130.00px;background:#303030;"></div>
<div class="a" style="left:2047.00px;top:10.00px;width:1.00px;height:1230.00px;background:#303030;"></div>
<div class="a" style="left:0.00px;top:0.00px;width:10.00px;height:10.00px;background:radial-gradient(circle at 100% 100%, rgba(0,0,0,0) 8.6px, #8a8a8a 9.3px, #ececec 10.4px);"></div>
<div class="a" style="left:2038.00px;top:0.00px;width:10.00px;height:10.00px;background:radial-gradient(circle at 0% 100%, rgba(0,0,0,0) 8.6px, #8a8a8a 9.3px, #ececec 10.4px);"></div>
<div class="a" style="left:0.00px;top:1240.00px;width:11.00px;height:11.00px;background:radial-gradient(circle at 100% 0%, rgba(0,0,0,0) 10px, #3a2a1c 10.8px);"></div>
<div class="a" style="left:2037.00px;top:1240.00px;width:11.00px;height:11.00px;background:radial-gradient(circle at 0% 0%, rgba(0,0,0,0) 10px, #3a2a1c 10.8px);"></div>
</div>
</body></html>
